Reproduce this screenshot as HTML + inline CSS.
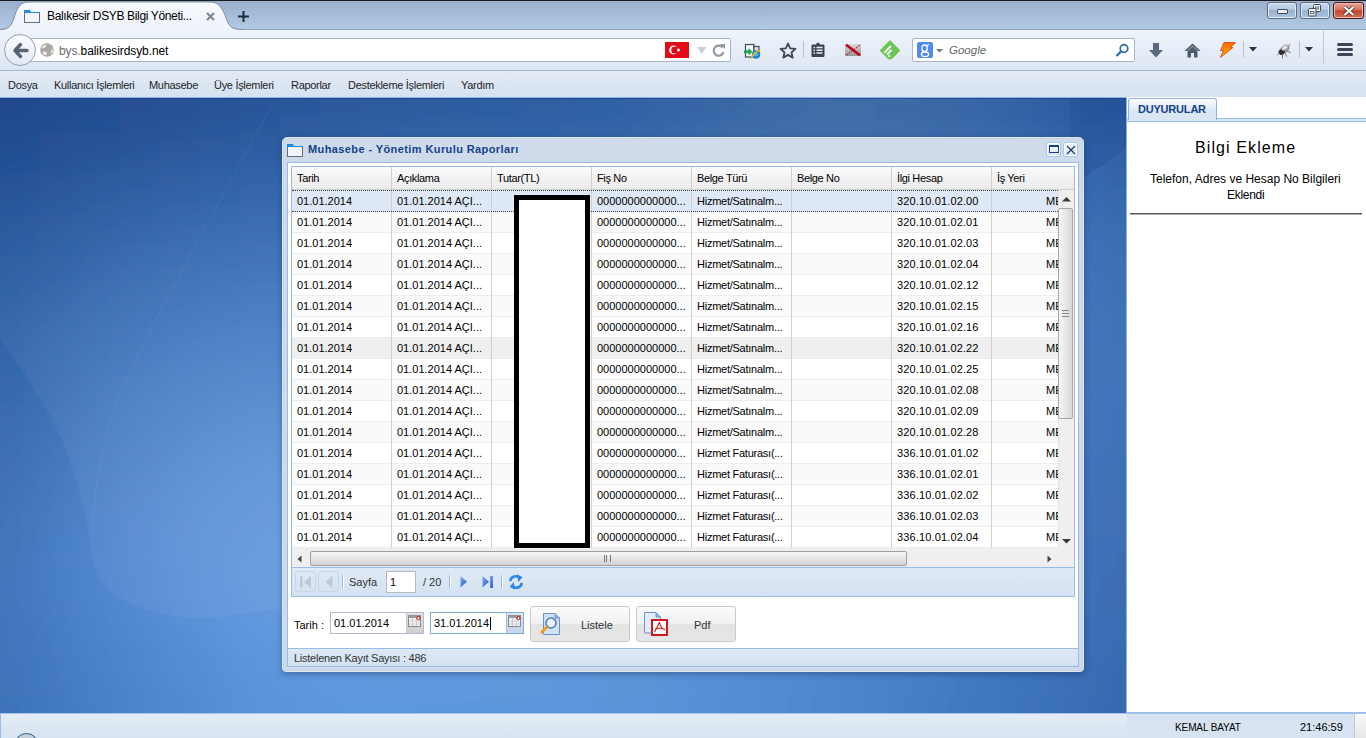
<!DOCTYPE html>
<html><head><meta charset="utf-8">
<style>
*{box-sizing:border-box}
html,body{margin:0;padding:0}
body{width:1366px;height:738px;overflow:hidden;position:relative;font-family:"Liberation Sans",sans-serif;font-size:11px;color:#000;background:#3a6cb5}
.a{position:absolute}
.t{position:absolute;white-space:nowrap;line-height:1}
svg{position:absolute;overflow:visible}
.mt{font-size:11px;color:#1e1e1e;letter-spacing:-0.3px;top:80px}
.gt{font-size:11px;color:#000}
.row{position:absolute;left:292px;width:766px;height:21px;border-bottom:1px solid #ededed;background:#fff}
.row.alt{background:#fafafa}
.row.hov{background:#efefef}
.row.sel{background:#dfe8f6;border-top:1px dotted #404040;border-bottom:1px dotted #404040}
.gcol{position:absolute;width:1px;background:#d0d0d0}
.hcol{position:absolute;width:1px;background:#d0d0d0}
.ht{font-size:11px;color:#000;top:173px;letter-spacing:-0.35px}

</style></head><body>
<!-- ===== TAB STRIP ===== -->
<div class="a" style="left:0;top:0;width:1366px;height:29px;background:linear-gradient(#97afcd,#b3cae4)"></div>
<div class="a" style="left:0;top:0;width:1366px;height:1px;background:#1c1c1c"></div>
<!-- window buttons -->
<div class="a" style="left:1267px;top:2px;width:30px;height:17px;border:1px solid #5b6d84;border-radius:3px;background:linear-gradient(#c9d9ec 0%,#b3c8e0 45%,#98b2d0 50%,#a9c2de 100%);box-shadow:inset 0 0 0 1px #e2ebf6"></div>
<div class="a" style="left:1277px;top:9px;width:11px;height:5px;border:1px solid #3d4a5c;background:#f2f2f2;border-radius:1px"></div>
<div class="a" style="left:1300px;top:2px;width:30px;height:17px;border:1px solid #5b6d84;border-radius:3px;background:linear-gradient(#c9d9ec 0%,#b3c8e0 45%,#98b2d0 50%,#a9c2de 100%);box-shadow:inset 0 0 0 1px #e2ebf6"></div>
<svg style="left:1308px;top:4px" width="14" height="13"><rect x="5.5" y="0.5" width="7" height="7" rx="1" fill="#f4f4f4" stroke="#3d4a5c"/><rect x="7.5" y="3" width="3" height="2" fill="none" stroke="#3d4a5c" stroke-width="0.8"/><rect x="0.5" y="4.5" width="7.5" height="7.5" rx="1" fill="#f4f4f4" stroke="#3d4a5c"/><rect x="2.5" y="7.5" width="3.5" height="2.2" fill="none" stroke="#3d4a5c" stroke-width="0.8"/></svg>

<div class="a" style="left:1333px;top:2px;width:31px;height:17px;border:1px solid #4a1214;border-radius:3px;background:linear-gradient(#e8a495 0%,#d9725c 45%,#c4452a 52%,#d36e55 100%);box-shadow:inset 0 0 0 1px #f0c2b6"></div>
<svg style="left:1343px;top:6px" width="12" height="10"><path d="M1.5 1 L10.5 9 M10.5 1 L1.5 9" stroke="#3b2a2a" stroke-width="3.6"/><path d="M1.5 1 L10.5 9 M10.5 1 L1.5 9" stroke="#fff" stroke-width="2.2"/></svg>

<!-- ===== NAV BAR ===== -->
<div class="a" style="left:0;top:29px;width:1366px;height:42px;background:linear-gradient(#eef3fa,#dde7f3);border-top:1px solid #8ea4bd;border-bottom:1px solid #a9b9cd"></div>
<svg style="left:0;top:0" width="260" height="31">
 <defs><linearGradient id="tabg" x1="0" y1="0" x2="0" y2="1"><stop offset="0" stop-color="#f7f9fd"/><stop offset="1" stop-color="#eef3fa"/></linearGradient></defs>
 <path d="M-4 30.5 C10 30 11 27 15 15 C18 6 21 2 29 2 L210 2 C218 2 221 6 225 15 C229 27 231 29.5 243 29.5 L243 31 L-4 31 Z" fill="url(#tabg)"/>
 <path d="M-4 29.5 C10 29.5 11 27 15 15 C18 6 21 2 29 2 L210 2 C218 2 221 6 225 15 C229 27 231 29.5 243 29.5" fill="none" stroke="#7990a9" stroke-width="1"/>
</svg>
<!-- folder icon tab -->
<svg style="left:24px;top:9px" width="17" height="14">
 <rect x="0.5" y="3.5" width="15" height="10" fill="#f4f6fa" stroke="#5f7086"/>
 <path d="M0 1 L6 1 L7 3 L16 3 L16 4 L0 4 Z" fill="#1e8ae6"/>
</svg>
<span class="t" style="left:47px;top:10px;font-size:12px;letter-spacing:-0.35px;color:#000">Balıkesir DSYB Bilgi Yöneti...</span>
<svg style="left:206px;top:12px" width="9" height="9"><path d="M1 1 L8 8 M8 1 L1 8" stroke="#808891" stroke-width="2.2"/></svg>
<svg style="left:238px;top:11px" width="11" height="11"><path d="M5.5 0 V11 M0 5.5 H11" stroke="#1f2b38" stroke-width="2"/></svg>
<!-- address bar -->
<div class="a" style="left:18px;top:38px;width:713px;height:24px;background:#fff;border:1px solid #a5b5c9;border-radius:2px"></div>
<div class="a" style="left:4px;top:34px;width:32px;height:32px;border-radius:50%;background:linear-gradient(#fbfcfe,#e3eaf3);border:1px solid #8e9fb2"></div>
<svg style="left:12px;top:42px" width="18" height="17"><path d="M8.5 2.5 L3 8.5 L8.5 14.5 M4 8.5 H15" fill="none" stroke="#566474" stroke-width="3.4" stroke-linecap="round" stroke-linejoin="round"/></svg>
<svg style="left:40px;top:43px" width="14" height="14"><circle cx="7" cy="7" r="6.8" fill="#a9a9a9"/><path d="M2 5 C2.5 2.5 5 1.5 6.5 2.2 C7 3 5 4.5 3 5.5 Z" fill="#f2f2f2"/><path d="M3 9 C4 8 6.5 8.5 7 10 C7 12 5 12.5 4 12 C3 11 2.5 10 3 9 Z" fill="#f2f2f2"/><path d="M12.8 6 C13.2 8 12.5 10 11 10.5 C10.2 9.5 11 7 12.8 6 Z" fill="#f2f2f2"/></svg>
<span class="t" style="left:59px;top:45px;font-size:12px;color:#6d6d6d;letter-spacing:-0.1px">bys.<span style="color:#000">balikesirdsyb.net</span></span>
<!-- flag -->
<div class="a" style="left:665px;top:42px;width:24px;height:16px;background:#e30a17"></div>
<svg style="left:665px;top:42px" width="24" height="16"><circle cx="8.5" cy="8" r="4.4" fill="#fff"/><circle cx="9.7" cy="8" r="3.5" fill="#e30a17"/><circle cx="13.5" cy="8" r="1.5" fill="#fff"/></svg>
<svg style="left:697px;top:47px" width="10" height="8"><path d="M0 0 H9.5 L4.75 7 Z" fill="#c8d0da"/></svg>
<svg style="left:712px;top:43px" width="14" height="14"><path d="M10.5 4.5 A5 5 0 1 0 11.5 9" stroke="#8b98a6" stroke-width="2.2" fill="none"/><path d="M8 1 L13 1 L13 6 Z" fill="#8b98a6"/></svg>
<!-- IE tab icon -->
<svg style="left:743px;top:43px" width="20" height="17">
 <rect x="2.5" y="1.5" width="8.5" height="12.5" fill="#fbfaf4" stroke="#3b4d66" stroke-width="1.2"/>
 <rect x="11" y="3.5" width="5" height="10" fill="#e9e6dc" stroke="#3b4d66" stroke-width="1.2"/>
 <path d="M1 7.3 H5.5 V5 L9.5 8.8 L5.5 12.6 V10.3 H1 Z" fill="#1fa84a"/>
 <circle cx="13" cy="11.5" r="4.2" fill="#1f7fe0"/>
 <circle cx="13" cy="11.5" r="2" fill="#58b8f8"/>
 <path d="M8.5 15.5 C9 12 13 8 17.5 7.5" stroke="#f4c20f" stroke-width="1.5" fill="none"/>
</svg>
<!-- star -->
<svg style="left:779px;top:42px" width="18" height="17"><path d="M9 1.5 L11.2 6.4 L16.5 6.9 L12.5 10.4 L13.7 15.6 L9 12.9 L4.3 15.6 L5.5 10.4 L1.5 6.9 L6.8 6.4 Z" fill="none" stroke="#3b4756" stroke-width="1.8" stroke-linejoin="round"/></svg>
<div class="a" style="left:803px;top:41px;width:1px;height:17px;background:#b8c4d2"></div>
<svg style="left:810px;top:42px" width="16" height="16"><path d="M2 3 H5.5 L8 0.8 L10.5 3 H14 V14.5 H2 Z" fill="#3b4756" stroke="#3b4756" stroke-linejoin="round"/><path d="M3.5 5.5 H5 M6.5 5.5 H12.5 M3.5 8.2 H5 M6.5 8.2 H12.5 M3.5 11 H5 M6.5 11 H12.5" stroke="#e9eef5" stroke-width="1.4"/></svg>
<svg style="left:845px;top:44px" width="16" height="12"><defs><linearGradient id="xg" x1="0" y1="0" x2="0" y2="1"><stop offset="0" stop-color="#dadada"/><stop offset="1" stop-color="#969696"/></linearGradient></defs><rect x="0" y="0" width="16" height="12" fill="url(#xg)"/><path d="M1 0.8 L15 11.2" stroke="#c0001a" stroke-width="2.6"/><path d="M15 1 L1 11.5" stroke="#c0001a" stroke-width="1" stroke-dasharray="2 1"/></svg>
<svg style="left:879px;top:40px" width="22" height="20"><path d="M11 1.5 L20 10.5 L13 17.5 Q11 19.5 9 17.5 L2 10.5 Z" fill="#6cc655" stroke="#6cc655" stroke-width="2" stroke-linejoin="round"/><path d="M6 12 L11.5 6.5 M8.5 14 L12 10.5" stroke="#fff" stroke-width="1.8" stroke-linecap="round"/><circle cx="10.2" cy="16" r="1.1" fill="#fff"/></svg>
<!-- search box -->
<div class="a" style="left:912px;top:38px;width:223px;height:24px;background:#fff;border:1px solid #a5b5c9;border-radius:2px"></div>
<div class="a" style="left:917px;top:42px;width:16px;height:16px;background:#4d8bf2;border-radius:2px"></div>
<svg style="left:917px;top:42px" width="16" height="16"><ellipse cx="7.6" cy="6.2" rx="2.7" ry="3.2" fill="none" stroke="#fff" stroke-width="1.3"/><ellipse cx="8" cy="12.3" rx="3.6" ry="2.3" fill="none" stroke="#fff" stroke-width="1.3"/><path d="M6 8.8 C5 9.5 5.5 10.2 6.5 10.2 M9.5 3.5 L12 2.6" stroke="#fff" stroke-width="1.2" fill="none"/></svg>
<svg style="left:936px;top:49px" width="8" height="4"><path d="M0 0 H7 L3.5 3.5 Z" fill="#6b7785"/></svg>
<span class="t" style="left:949px;top:45px;font-size:11.5px;font-style:italic;color:#666">Google</span>
<svg style="left:1115px;top:43px" width="15" height="14"><circle cx="9" cy="5.5" r="3.8" fill="none" stroke="#2a6aa8" stroke-width="1.7"/><path d="M6.2 8.3 L1.5 13" stroke="#2a6aa8" stroke-width="2.3"/></svg>
<!-- right icons -->
<svg style="left:1148px;top:42px" width="16" height="16"><path d="M5 1 H11 V8 H15 L8 15.5 L1 8 H5 Z" fill="#59687a"/></svg>
<svg style="left:1184px;top:43px" width="17" height="15"><path d="M8.5 0.5 L16.5 8 L14 8 L8.5 3 L3 8 L0.5 8 Z" fill="#4e5d6e"/><path d="M3.5 8 L8.5 3.5 L13.5 8 V14.5 H10 V10 H7 V14.5 H3.5 Z" fill="#4e5d6e"/></svg>
<svg style="left:1219px;top:41px" width="18" height="18"><defs><linearGradient id="fg" x1="0" y1="0" x2="0" y2="1"><stop offset="0" stop-color="#ff6a00"/><stop offset="1" stop-color="#ffb000"/></linearGradient></defs><path d="M5 1.5 L16.5 1.5 L11.5 6.5 L14 6.5 L1.5 16.5 L4.5 9.5 L1.5 9.5 Z" fill="url(#fg)" stroke="#d5400a" stroke-width="0.8" stroke-linejoin="round"/></svg>
<div class="a" style="left:1243px;top:41px;width:1px;height:17px;background:#b8c4d2"></div>
<svg style="left:1249px;top:47px" width="9" height="5"><path d="M0 0 H8 L4 4.5 Z" fill="#273442"/></svg>
<svg style="left:1275px;top:42px" width="18" height="16"><g transform="rotate(-35 9 8)"><ellipse cx="9" cy="8" rx="6.5" ry="3.6" fill="#9a9a9a"/><ellipse cx="6" cy="8.3" rx="3" ry="2.8" fill="#2e2e2e"/><ellipse cx="11" cy="6.5" rx="3.6" ry="2.2" fill="#e4e4e4" stroke="#777" stroke-width="0.6"/><path d="M5 11 L3 14 M8 11.5 L7.5 15 M11 11 L13 14 M2.5 8 L0.5 8.5 M15 7 L17.5 7" stroke="#555" stroke-width="0.7"/></g></svg>
<div class="a" style="left:1299px;top:41px;width:1px;height:17px;background:#b8c4d2"></div>
<svg style="left:1305px;top:47px" width="9" height="5"><path d="M0 0 H8 L4 4.5 Z" fill="#273442"/></svg>
<div class="a" style="left:1323px;top:30px;width:1px;height:34px;background:#c0cbd8"></div>
<div class="a" style="left:1337px;top:43px;width:16px;height:3px;background:#3b4756;border-radius:1.5px"></div>
<div class="a" style="left:1337px;top:48px;width:16px;height:3px;background:#3b4756;border-radius:1.5px"></div>
<div class="a" style="left:1337px;top:53px;width:16px;height:3px;background:#3b4756;border-radius:1.5px"></div>

<!-- ===== MENU BAR ===== -->
<div class="a" style="left:0;top:71px;width:1366px;height:26px;background:linear-gradient(#e2eaf5,#d6e2f0)"></div>
<span class="t mt" style="left:8px">Dosya</span>
<span class="t mt" style="left:54px">Kullanıcı İşlemleri</span>
<span class="t mt" style="left:149px">Muhasebe</span>
<span class="t mt" style="left:214px">Üye İşlemleri</span>
<span class="t mt" style="left:291px">Raporlar</span>
<span class="t mt" style="left:348px">Destekleme İşlemleri</span>
<span class="t mt" style="left:461px">Yardım</span>

<!-- ===== DESKTOP ===== -->
<div class="a" style="left:0;top:97px;width:1126px;height:616px;overflow:hidden">
<svg style="left:0;top:0" width="1126" height="616" viewBox="0 97 1126 616">
 <defs>
  <filter id="bl" filterUnits="userSpaceOnUse" x="-200" y="-100" width="1600" height="1000"><feGaussianBlur stdDeviation="28"/></filter>
  <radialGradient id="sw" cx="330" cy="560" r="700" gradientUnits="userSpaceOnUse">
   <stop offset="0" stop-color="#ffffff" stop-opacity="0.045"/>
   <stop offset="0.5" stop-color="#ffffff" stop-opacity="0.045"/>
   <stop offset="1" stop-color="#ffffff" stop-opacity="0"/>
  </radialGradient>
 </defs>
 <g filter="url(#bl)">
<rect x="-120" y="-23" width="40" height="40" fill="#184185"/>
<rect x="-80" y="-23" width="40" height="40" fill="#184185"/>
<rect x="-40" y="-23" width="40" height="40" fill="#184185"/>
<rect x="0" y="-23" width="40" height="40" fill="#194386"/>
<rect x="40" y="-23" width="40" height="40" fill="#1b4589"/>
<rect x="80" y="-23" width="40" height="40" fill="#1c468b"/>
<rect x="120" y="-23" width="40" height="40" fill="#1d488d"/>
<rect x="160" y="-23" width="40" height="40" fill="#1e4a8f"/>
<rect x="200" y="-23" width="40" height="40" fill="#1f4c91"/>
<rect x="240" y="-23" width="40" height="40" fill="#204d93"/>
<rect x="280" y="-23" width="40" height="40" fill="#214f95"/>
<rect x="320" y="-23" width="40" height="40" fill="#225196"/>
<rect x="360" y="-23" width="40" height="40" fill="#245397"/>
<rect x="400" y="-23" width="40" height="40" fill="#245598"/>
<rect x="440" y="-23" width="40" height="40" fill="#25569a"/>
<rect x="480" y="-23" width="40" height="40" fill="#25579b"/>
<rect x="520" y="-23" width="40" height="40" fill="#26589d"/>
<rect x="560" y="-23" width="40" height="40" fill="#27599e"/>
<rect x="600" y="-23" width="40" height="40" fill="#2a5ba0"/>
<rect x="640" y="-23" width="40" height="40" fill="#2e5ea1"/>
<rect x="680" y="-23" width="40" height="40" fill="#3261a2"/>
<rect x="720" y="-23" width="40" height="40" fill="#3764a3"/>
<rect x="760" y="-23" width="40" height="40" fill="#3a67a4"/>
<rect x="800" y="-23" width="40" height="40" fill="#3d69a5"/>
<rect x="840" y="-23" width="40" height="40" fill="#3c69a5"/>
<rect x="880" y="-23" width="40" height="40" fill="#3b67a4"/>
<rect x="920" y="-23" width="40" height="40" fill="#3865a4"/>
<rect x="960" y="-23" width="40" height="40" fill="#3462a3"/>
<rect x="1000" y="-23" width="40" height="40" fill="#305fa2"/>
<rect x="1040" y="-23" width="40" height="40" fill="#2b5ba0"/>
<rect x="1080" y="-23" width="40" height="40" fill="#27579e"/>
<rect x="1120" y="-23" width="40" height="40" fill="#25549d"/>
<rect x="1160" y="-23" width="40" height="40" fill="#25549d"/>
<rect x="1200" y="-23" width="40" height="40" fill="#25549d"/>
<rect x="1240" y="-23" width="40" height="40" fill="#25549d"/>
<rect x="-120" y="17" width="40" height="40" fill="#184185"/>
<rect x="-80" y="17" width="40" height="40" fill="#184185"/>
<rect x="-40" y="17" width="40" height="40" fill="#184185"/>
<rect x="0" y="17" width="40" height="40" fill="#194386"/>
<rect x="40" y="17" width="40" height="40" fill="#1b4589"/>
<rect x="80" y="17" width="40" height="40" fill="#1c468b"/>
<rect x="120" y="17" width="40" height="40" fill="#1d488d"/>
<rect x="160" y="17" width="40" height="40" fill="#1e4a8f"/>
<rect x="200" y="17" width="40" height="40" fill="#1f4c91"/>
<rect x="240" y="17" width="40" height="40" fill="#204d93"/>
<rect x="280" y="17" width="40" height="40" fill="#214f95"/>
<rect x="320" y="17" width="40" height="40" fill="#225196"/>
<rect x="360" y="17" width="40" height="40" fill="#245397"/>
<rect x="400" y="17" width="40" height="40" fill="#245598"/>
<rect x="440" y="17" width="40" height="40" fill="#25569a"/>
<rect x="480" y="17" width="40" height="40" fill="#25579b"/>
<rect x="520" y="17" width="40" height="40" fill="#26589d"/>
<rect x="560" y="17" width="40" height="40" fill="#27599e"/>
<rect x="600" y="17" width="40" height="40" fill="#2a5ba0"/>
<rect x="640" y="17" width="40" height="40" fill="#2e5ea1"/>
<rect x="680" y="17" width="40" height="40" fill="#3261a2"/>
<rect x="720" y="17" width="40" height="40" fill="#3764a3"/>
<rect x="760" y="17" width="40" height="40" fill="#3a67a4"/>
<rect x="800" y="17" width="40" height="40" fill="#3d69a5"/>
<rect x="840" y="17" width="40" height="40" fill="#3c69a5"/>
<rect x="880" y="17" width="40" height="40" fill="#3b67a4"/>
<rect x="920" y="17" width="40" height="40" fill="#3865a4"/>
<rect x="960" y="17" width="40" height="40" fill="#3462a3"/>
<rect x="1000" y="17" width="40" height="40" fill="#305fa2"/>
<rect x="1040" y="17" width="40" height="40" fill="#2b5ba0"/>
<rect x="1080" y="17" width="40" height="40" fill="#27579e"/>
<rect x="1120" y="17" width="40" height="40" fill="#25549d"/>
<rect x="1160" y="17" width="40" height="40" fill="#25549d"/>
<rect x="1200" y="17" width="40" height="40" fill="#25549d"/>
<rect x="1240" y="17" width="40" height="40" fill="#25549d"/>
<rect x="-120" y="57" width="40" height="40" fill="#184185"/>
<rect x="-80" y="57" width="40" height="40" fill="#184185"/>
<rect x="-40" y="57" width="40" height="40" fill="#184185"/>
<rect x="0" y="57" width="40" height="40" fill="#194386"/>
<rect x="40" y="57" width="40" height="40" fill="#1b4589"/>
<rect x="80" y="57" width="40" height="40" fill="#1c468b"/>
<rect x="120" y="57" width="40" height="40" fill="#1d488d"/>
<rect x="160" y="57" width="40" height="40" fill="#1e4a8f"/>
<rect x="200" y="57" width="40" height="40" fill="#1f4c91"/>
<rect x="240" y="57" width="40" height="40" fill="#204d93"/>
<rect x="280" y="57" width="40" height="40" fill="#214f95"/>
<rect x="320" y="57" width="40" height="40" fill="#225196"/>
<rect x="360" y="57" width="40" height="40" fill="#245397"/>
<rect x="400" y="57" width="40" height="40" fill="#245598"/>
<rect x="440" y="57" width="40" height="40" fill="#25569a"/>
<rect x="480" y="57" width="40" height="40" fill="#25579b"/>
<rect x="520" y="57" width="40" height="40" fill="#26589d"/>
<rect x="560" y="57" width="40" height="40" fill="#27599e"/>
<rect x="600" y="57" width="40" height="40" fill="#2a5ba0"/>
<rect x="640" y="57" width="40" height="40" fill="#2e5ea1"/>
<rect x="680" y="57" width="40" height="40" fill="#3261a2"/>
<rect x="720" y="57" width="40" height="40" fill="#3764a3"/>
<rect x="760" y="57" width="40" height="40" fill="#3a67a4"/>
<rect x="800" y="57" width="40" height="40" fill="#3d69a5"/>
<rect x="840" y="57" width="40" height="40" fill="#3c69a5"/>
<rect x="880" y="57" width="40" height="40" fill="#3b67a4"/>
<rect x="920" y="57" width="40" height="40" fill="#3865a4"/>
<rect x="960" y="57" width="40" height="40" fill="#3462a3"/>
<rect x="1000" y="57" width="40" height="40" fill="#305fa2"/>
<rect x="1040" y="57" width="40" height="40" fill="#2b5ba0"/>
<rect x="1080" y="57" width="40" height="40" fill="#27579e"/>
<rect x="1120" y="57" width="40" height="40" fill="#25549d"/>
<rect x="1160" y="57" width="40" height="40" fill="#25549d"/>
<rect x="1200" y="57" width="40" height="40" fill="#25549d"/>
<rect x="1240" y="57" width="40" height="40" fill="#25549d"/>
<rect x="-120" y="97" width="40" height="40" fill="#1a4488"/>
<rect x="-80" y="97" width="40" height="40" fill="#1a4488"/>
<rect x="-40" y="97" width="40" height="40" fill="#1a4488"/>
<rect x="0" y="97" width="40" height="40" fill="#1b4589"/>
<rect x="40" y="97" width="40" height="40" fill="#1d488c"/>
<rect x="80" y="97" width="40" height="40" fill="#1e4a8e"/>
<rect x="120" y="97" width="40" height="40" fill="#204b90"/>
<rect x="160" y="97" width="40" height="40" fill="#214d93"/>
<rect x="200" y="97" width="40" height="40" fill="#224f95"/>
<rect x="240" y="97" width="40" height="40" fill="#225197"/>
<rect x="280" y="97" width="40" height="40" fill="#245398"/>
<rect x="320" y="97" width="40" height="40" fill="#25559a"/>
<rect x="360" y="97" width="40" height="40" fill="#26579b"/>
<rect x="400" y="97" width="40" height="40" fill="#27589c"/>
<rect x="440" y="97" width="40" height="40" fill="#28599d"/>
<rect x="480" y="97" width="40" height="40" fill="#285a9f"/>
<rect x="520" y="97" width="40" height="40" fill="#295ba0"/>
<rect x="560" y="97" width="40" height="40" fill="#2a5ca2"/>
<rect x="600" y="97" width="40" height="40" fill="#2c5ea3"/>
<rect x="640" y="97" width="40" height="40" fill="#3061a4"/>
<rect x="680" y="97" width="40" height="40" fill="#3564a5"/>
<rect x="720" y="97" width="40" height="40" fill="#3968a6"/>
<rect x="760" y="97" width="40" height="40" fill="#3d6aa7"/>
<rect x="800" y="97" width="40" height="40" fill="#3f6ca7"/>
<rect x="840" y="97" width="40" height="40" fill="#3f6ca8"/>
<rect x="880" y="97" width="40" height="40" fill="#3d6aa7"/>
<rect x="920" y="97" width="40" height="40" fill="#3b68a7"/>
<rect x="960" y="97" width="40" height="40" fill="#3766a6"/>
<rect x="1000" y="97" width="40" height="40" fill="#3362a5"/>
<rect x="1040" y="97" width="40" height="40" fill="#2e5ea3"/>
<rect x="1080" y="97" width="40" height="40" fill="#2a5aa1"/>
<rect x="1120" y="97" width="40" height="40" fill="#2758a0"/>
<rect x="1160" y="97" width="40" height="40" fill="#2758a0"/>
<rect x="1200" y="97" width="40" height="40" fill="#2758a0"/>
<rect x="1240" y="97" width="40" height="40" fill="#2758a0"/>
<rect x="-120" y="137" width="40" height="40" fill="#1e4a8e"/>
<rect x="-80" y="137" width="40" height="40" fill="#1e4a8e"/>
<rect x="-40" y="137" width="40" height="40" fill="#1e4a8e"/>
<rect x="0" y="137" width="40" height="40" fill="#1f4b90"/>
<rect x="40" y="137" width="40" height="40" fill="#214e93"/>
<rect x="80" y="137" width="40" height="40" fill="#235196"/>
<rect x="120" y="137" width="40" height="40" fill="#245398"/>
<rect x="160" y="137" width="40" height="40" fill="#26559b"/>
<rect x="200" y="137" width="40" height="40" fill="#27569d"/>
<rect x="240" y="137" width="40" height="40" fill="#27589f"/>
<rect x="280" y="137" width="40" height="40" fill="#295aa1"/>
<rect x="320" y="137" width="40" height="40" fill="#2a5ca2"/>
<rect x="360" y="137" width="40" height="40" fill="#2c5ea3"/>
<rect x="400" y="137" width="40" height="40" fill="#2d5fa4"/>
<rect x="440" y="137" width="40" height="40" fill="#2d60a5"/>
<rect x="480" y="137" width="40" height="40" fill="#2e61a6"/>
<rect x="520" y="137" width="40" height="40" fill="#2f62a7"/>
<rect x="560" y="137" width="40" height="40" fill="#3063a8"/>
<rect x="600" y="137" width="40" height="40" fill="#3265a9"/>
<rect x="640" y="137" width="40" height="40" fill="#3668aa"/>
<rect x="680" y="137" width="40" height="40" fill="#3a6bab"/>
<rect x="720" y="137" width="40" height="40" fill="#3e6dac"/>
<rect x="760" y="137" width="40" height="40" fill="#4170ad"/>
<rect x="800" y="137" width="40" height="40" fill="#4371ad"/>
<rect x="840" y="137" width="40" height="40" fill="#4371ad"/>
<rect x="880" y="137" width="40" height="40" fill="#4270ad"/>
<rect x="920" y="137" width="40" height="40" fill="#3f6ead"/>
<rect x="960" y="137" width="40" height="40" fill="#3c6cac"/>
<rect x="1000" y="137" width="40" height="40" fill="#3869ab"/>
<rect x="1040" y="137" width="40" height="40" fill="#3466aa"/>
<rect x="1080" y="137" width="40" height="40" fill="#3062a8"/>
<rect x="1120" y="137" width="40" height="40" fill="#2e60a7"/>
<rect x="1160" y="137" width="40" height="40" fill="#2e60a7"/>
<rect x="1200" y="137" width="40" height="40" fill="#2e60a7"/>
<rect x="1240" y="137" width="40" height="40" fill="#2e60a7"/>
<rect x="-120" y="177" width="40" height="40" fill="#214f94"/>
<rect x="-80" y="177" width="40" height="40" fill="#214f94"/>
<rect x="-40" y="177" width="40" height="40" fill="#214f94"/>
<rect x="0" y="177" width="40" height="40" fill="#235196"/>
<rect x="40" y="177" width="40" height="40" fill="#25559a"/>
<rect x="80" y="177" width="40" height="40" fill="#28589d"/>
<rect x="120" y="177" width="40" height="40" fill="#2a5aa1"/>
<rect x="160" y="177" width="40" height="40" fill="#2b5da3"/>
<rect x="200" y="177" width="40" height="40" fill="#2c5ea6"/>
<rect x="240" y="177" width="40" height="40" fill="#2d60a8"/>
<rect x="280" y="177" width="40" height="40" fill="#2f62a9"/>
<rect x="320" y="177" width="40" height="40" fill="#3063aa"/>
<rect x="360" y="177" width="40" height="40" fill="#3265ab"/>
<rect x="400" y="177" width="40" height="40" fill="#3366ac"/>
<rect x="440" y="177" width="40" height="40" fill="#3467ad"/>
<rect x="480" y="177" width="40" height="40" fill="#3468ad"/>
<rect x="520" y="177" width="40" height="40" fill="#3569ae"/>
<rect x="560" y="177" width="40" height="40" fill="#366aaf"/>
<rect x="600" y="177" width="40" height="40" fill="#386cb0"/>
<rect x="640" y="177" width="40" height="40" fill="#3b6eb1"/>
<rect x="680" y="177" width="40" height="40" fill="#3f70b1"/>
<rect x="720" y="177" width="40" height="40" fill="#4273b2"/>
<rect x="760" y="177" width="40" height="40" fill="#4575b2"/>
<rect x="800" y="177" width="40" height="40" fill="#4676b2"/>
<rect x="840" y="177" width="40" height="40" fill="#4776b2"/>
<rect x="880" y="177" width="40" height="40" fill="#4675b2"/>
<rect x="920" y="177" width="40" height="40" fill="#4374b2"/>
<rect x="960" y="177" width="40" height="40" fill="#4172b1"/>
<rect x="1000" y="177" width="40" height="40" fill="#3e70b1"/>
<rect x="1040" y="177" width="40" height="40" fill="#3a6db0"/>
<rect x="1080" y="177" width="40" height="40" fill="#376aae"/>
<rect x="1120" y="177" width="40" height="40" fill="#3467ad"/>
<rect x="1160" y="177" width="40" height="40" fill="#3467ad"/>
<rect x="1200" y="177" width="40" height="40" fill="#3467ad"/>
<rect x="1240" y="177" width="40" height="40" fill="#3467ad"/>
<rect x="-120" y="217" width="40" height="40" fill="#25559a"/>
<rect x="-80" y="217" width="40" height="40" fill="#25559a"/>
<rect x="-40" y="217" width="40" height="40" fill="#25559a"/>
<rect x="0" y="217" width="40" height="40" fill="#27579c"/>
<rect x="40" y="217" width="40" height="40" fill="#2a5ba0"/>
<rect x="80" y="217" width="40" height="40" fill="#2d5fa5"/>
<rect x="120" y="217" width="40" height="40" fill="#2f62a9"/>
<rect x="160" y="217" width="40" height="40" fill="#3165ac"/>
<rect x="200" y="217" width="40" height="40" fill="#3367af"/>
<rect x="240" y="217" width="40" height="40" fill="#3469b1"/>
<rect x="280" y="217" width="40" height="40" fill="#366ab2"/>
<rect x="320" y="217" width="40" height="40" fill="#376cb3"/>
<rect x="360" y="217" width="40" height="40" fill="#386db3"/>
<rect x="400" y="217" width="40" height="40" fill="#396eb4"/>
<rect x="440" y="217" width="40" height="40" fill="#3a6fb4"/>
<rect x="480" y="217" width="40" height="40" fill="#3b70b5"/>
<rect x="520" y="217" width="40" height="40" fill="#3c70b5"/>
<rect x="560" y="217" width="40" height="40" fill="#3d71b6"/>
<rect x="600" y="217" width="40" height="40" fill="#3f73b6"/>
<rect x="640" y="217" width="40" height="40" fill="#4174b7"/>
<rect x="680" y="217" width="40" height="40" fill="#4476b7"/>
<rect x="720" y="217" width="40" height="40" fill="#4678b7"/>
<rect x="760" y="217" width="40" height="40" fill="#4879b7"/>
<rect x="800" y="217" width="40" height="40" fill="#497ab7"/>
<rect x="840" y="217" width="40" height="40" fill="#497ab7"/>
<rect x="880" y="217" width="40" height="40" fill="#4879b7"/>
<rect x="920" y="217" width="40" height="40" fill="#4778b6"/>
<rect x="960" y="217" width="40" height="40" fill="#4476b6"/>
<rect x="1000" y="217" width="40" height="40" fill="#4275b5"/>
<rect x="1040" y="217" width="40" height="40" fill="#3f72b4"/>
<rect x="1080" y="217" width="40" height="40" fill="#3b6fb3"/>
<rect x="1120" y="217" width="40" height="40" fill="#396cb1"/>
<rect x="1160" y="217" width="40" height="40" fill="#396cb1"/>
<rect x="1200" y="217" width="40" height="40" fill="#396cb1"/>
<rect x="1240" y="217" width="40" height="40" fill="#396cb1"/>
<rect x="-120" y="257" width="40" height="40" fill="#295a9f"/>
<rect x="-80" y="257" width="40" height="40" fill="#295a9f"/>
<rect x="-40" y="257" width="40" height="40" fill="#295a9f"/>
<rect x="0" y="257" width="40" height="40" fill="#2b5da2"/>
<rect x="40" y="257" width="40" height="40" fill="#2f61a7"/>
<rect x="80" y="257" width="40" height="40" fill="#3266ac"/>
<rect x="120" y="257" width="40" height="40" fill="#356ab0"/>
<rect x="160" y="257" width="40" height="40" fill="#386eb4"/>
<rect x="200" y="257" width="40" height="40" fill="#3a70b7"/>
<rect x="240" y="257" width="40" height="40" fill="#3c72b9"/>
<rect x="280" y="257" width="40" height="40" fill="#3d73ba"/>
<rect x="320" y="257" width="40" height="40" fill="#3f74bb"/>
<rect x="360" y="257" width="40" height="40" fill="#4075bb"/>
<rect x="400" y="257" width="40" height="40" fill="#4076bc"/>
<rect x="440" y="257" width="40" height="40" fill="#4176bc"/>
<rect x="480" y="257" width="40" height="40" fill="#4277bc"/>
<rect x="520" y="257" width="40" height="40" fill="#4277bc"/>
<rect x="560" y="257" width="40" height="40" fill="#4378bc"/>
<rect x="600" y="257" width="40" height="40" fill="#4479bc"/>
<rect x="640" y="257" width="40" height="40" fill="#467abc"/>
<rect x="680" y="257" width="40" height="40" fill="#487bbc"/>
<rect x="720" y="257" width="40" height="40" fill="#4a7cbc"/>
<rect x="760" y="257" width="40" height="40" fill="#4b7dbc"/>
<rect x="800" y="257" width="40" height="40" fill="#4c7ebc"/>
<rect x="840" y="257" width="40" height="40" fill="#4c7dbb"/>
<rect x="880" y="257" width="40" height="40" fill="#4b7dbb"/>
<rect x="920" y="257" width="40" height="40" fill="#497bba"/>
<rect x="960" y="257" width="40" height="40" fill="#477aba"/>
<rect x="1000" y="257" width="40" height="40" fill="#4578b9"/>
<rect x="1040" y="257" width="40" height="40" fill="#4275b7"/>
<rect x="1080" y="257" width="40" height="40" fill="#3e72b6"/>
<rect x="1120" y="257" width="40" height="40" fill="#3c6fb4"/>
<rect x="1160" y="257" width="40" height="40" fill="#3c6fb4"/>
<rect x="1200" y="257" width="40" height="40" fill="#3c6fb4"/>
<rect x="1240" y="257" width="40" height="40" fill="#3c6fb4"/>
<rect x="-120" y="297" width="40" height="40" fill="#2d5fa4"/>
<rect x="-80" y="297" width="40" height="40" fill="#2d5fa4"/>
<rect x="-40" y="297" width="40" height="40" fill="#2d5fa4"/>
<rect x="0" y="297" width="40" height="40" fill="#2f62a7"/>
<rect x="40" y="297" width="40" height="40" fill="#3468ac"/>
<rect x="80" y="297" width="40" height="40" fill="#386db2"/>
<rect x="120" y="297" width="40" height="40" fill="#3c72b7"/>
<rect x="160" y="297" width="40" height="40" fill="#3f76bb"/>
<rect x="200" y="297" width="40" height="40" fill="#4279bf"/>
<rect x="240" y="297" width="40" height="40" fill="#447ac1"/>
<rect x="280" y="297" width="40" height="40" fill="#457cc2"/>
<rect x="320" y="297" width="40" height="40" fill="#467cc2"/>
<rect x="360" y="297" width="40" height="40" fill="#477dc3"/>
<rect x="400" y="297" width="40" height="40" fill="#477dc3"/>
<rect x="440" y="297" width="40" height="40" fill="#487ec3"/>
<rect x="480" y="297" width="40" height="40" fill="#487ec2"/>
<rect x="520" y="297" width="40" height="40" fill="#487ec2"/>
<rect x="560" y="297" width="40" height="40" fill="#497ec2"/>
<rect x="600" y="297" width="40" height="40" fill="#4a7fc2"/>
<rect x="640" y="297" width="40" height="40" fill="#4b7fc1"/>
<rect x="680" y="297" width="40" height="40" fill="#4c80c1"/>
<rect x="720" y="297" width="40" height="40" fill="#4d81c1"/>
<rect x="760" y="297" width="40" height="40" fill="#4e81c0"/>
<rect x="800" y="297" width="40" height="40" fill="#4e81c0"/>
<rect x="840" y="297" width="40" height="40" fill="#4d80bf"/>
<rect x="880" y="297" width="40" height="40" fill="#4c7fbe"/>
<rect x="920" y="297" width="40" height="40" fill="#4b7ebd"/>
<rect x="960" y="297" width="40" height="40" fill="#497cbc"/>
<rect x="1000" y="297" width="40" height="40" fill="#467abb"/>
<rect x="1040" y="297" width="40" height="40" fill="#4377b9"/>
<rect x="1080" y="297" width="40" height="40" fill="#4073b7"/>
<rect x="1120" y="297" width="40" height="40" fill="#3e71b6"/>
<rect x="1160" y="297" width="40" height="40" fill="#3e71b6"/>
<rect x="1200" y="297" width="40" height="40" fill="#3e71b6"/>
<rect x="1240" y="297" width="40" height="40" fill="#3e71b6"/>
<rect x="-120" y="337" width="40" height="40" fill="#3264a8"/>
<rect x="-80" y="337" width="40" height="40" fill="#3264a8"/>
<rect x="-40" y="337" width="40" height="40" fill="#3264a8"/>
<rect x="0" y="337" width="40" height="40" fill="#3467ab"/>
<rect x="40" y="337" width="40" height="40" fill="#396db1"/>
<rect x="80" y="337" width="40" height="40" fill="#3e73b8"/>
<rect x="120" y="337" width="40" height="40" fill="#4278bd"/>
<rect x="160" y="337" width="40" height="40" fill="#467dc2"/>
<rect x="200" y="337" width="40" height="40" fill="#4980c5"/>
<rect x="240" y="337" width="40" height="40" fill="#4b82c7"/>
<rect x="280" y="337" width="40" height="40" fill="#4d83c9"/>
<rect x="320" y="337" width="40" height="40" fill="#4e84c9"/>
<rect x="360" y="337" width="40" height="40" fill="#4e84c9"/>
<rect x="400" y="337" width="40" height="40" fill="#4e84c9"/>
<rect x="440" y="337" width="40" height="40" fill="#4e84c9"/>
<rect x="480" y="337" width="40" height="40" fill="#4e84c8"/>
<rect x="520" y="337" width="40" height="40" fill="#4e84c8"/>
<rect x="560" y="337" width="40" height="40" fill="#4e84c7"/>
<rect x="600" y="337" width="40" height="40" fill="#4f84c7"/>
<rect x="640" y="337" width="40" height="40" fill="#4f84c6"/>
<rect x="680" y="337" width="40" height="40" fill="#5084c6"/>
<rect x="720" y="337" width="40" height="40" fill="#5084c5"/>
<rect x="760" y="337" width="40" height="40" fill="#5084c4"/>
<rect x="800" y="337" width="40" height="40" fill="#5083c3"/>
<rect x="840" y="337" width="40" height="40" fill="#4f82c2"/>
<rect x="880" y="337" width="40" height="40" fill="#4e81c1"/>
<rect x="920" y="337" width="40" height="40" fill="#4c7fc0"/>
<rect x="960" y="337" width="40" height="40" fill="#4a7dbe"/>
<rect x="1000" y="337" width="40" height="40" fill="#477abd"/>
<rect x="1040" y="337" width="40" height="40" fill="#4477bb"/>
<rect x="1080" y="337" width="40" height="40" fill="#4174b8"/>
<rect x="1120" y="337" width="40" height="40" fill="#3f71b7"/>
<rect x="1160" y="337" width="40" height="40" fill="#3f71b7"/>
<rect x="1200" y="337" width="40" height="40" fill="#3f71b7"/>
<rect x="1240" y="337" width="40" height="40" fill="#3f71b7"/>
<rect x="-120" y="377" width="40" height="40" fill="#3668ab"/>
<rect x="-80" y="377" width="40" height="40" fill="#3668ab"/>
<rect x="-40" y="377" width="40" height="40" fill="#3668ab"/>
<rect x="0" y="377" width="40" height="40" fill="#396baf"/>
<rect x="40" y="377" width="40" height="40" fill="#3e72b6"/>
<rect x="80" y="377" width="40" height="40" fill="#4479bd"/>
<rect x="120" y="377" width="40" height="40" fill="#497ec3"/>
<rect x="160" y="377" width="40" height="40" fill="#4d83c7"/>
<rect x="200" y="377" width="40" height="40" fill="#5187cb"/>
<rect x="240" y="377" width="40" height="40" fill="#5389cd"/>
<rect x="280" y="377" width="40" height="40" fill="#548acf"/>
<rect x="320" y="377" width="40" height="40" fill="#558bcf"/>
<rect x="360" y="377" width="40" height="40" fill="#558bcf"/>
<rect x="400" y="377" width="40" height="40" fill="#558bcf"/>
<rect x="440" y="377" width="40" height="40" fill="#548ace"/>
<rect x="480" y="377" width="40" height="40" fill="#548ace"/>
<rect x="520" y="377" width="40" height="40" fill="#5389cd"/>
<rect x="560" y="377" width="40" height="40" fill="#5389cc"/>
<rect x="600" y="377" width="40" height="40" fill="#5388cb"/>
<rect x="640" y="377" width="40" height="40" fill="#5388ca"/>
<rect x="680" y="377" width="40" height="40" fill="#5388c9"/>
<rect x="720" y="377" width="40" height="40" fill="#5287c8"/>
<rect x="760" y="377" width="40" height="40" fill="#5286c7"/>
<rect x="800" y="377" width="40" height="40" fill="#5185c6"/>
<rect x="840" y="377" width="40" height="40" fill="#5084c5"/>
<rect x="880" y="377" width="40" height="40" fill="#4e82c3"/>
<rect x="920" y="377" width="40" height="40" fill="#4c80c1"/>
<rect x="960" y="377" width="40" height="40" fill="#4a7dc0"/>
<rect x="1000" y="377" width="40" height="40" fill="#477bbe"/>
<rect x="1040" y="377" width="40" height="40" fill="#4577bb"/>
<rect x="1080" y="377" width="40" height="40" fill="#4174b9"/>
<rect x="1120" y="377" width="40" height="40" fill="#3f71b7"/>
<rect x="1160" y="377" width="40" height="40" fill="#3f71b7"/>
<rect x="1200" y="377" width="40" height="40" fill="#3f71b7"/>
<rect x="1240" y="377" width="40" height="40" fill="#3f71b7"/>
<rect x="-120" y="417" width="40" height="40" fill="#3a6bae"/>
<rect x="-80" y="417" width="40" height="40" fill="#3a6bae"/>
<rect x="-40" y="417" width="40" height="40" fill="#3a6bae"/>
<rect x="0" y="417" width="40" height="40" fill="#3d6fb2"/>
<rect x="40" y="417" width="40" height="40" fill="#4376ba"/>
<rect x="80" y="417" width="40" height="40" fill="#497dc2"/>
<rect x="120" y="417" width="40" height="40" fill="#4f84c8"/>
<rect x="160" y="417" width="40" height="40" fill="#5389cc"/>
<rect x="200" y="417" width="40" height="40" fill="#578dd0"/>
<rect x="240" y="417" width="40" height="40" fill="#598fd2"/>
<rect x="280" y="417" width="40" height="40" fill="#5b90d4"/>
<rect x="320" y="417" width="40" height="40" fill="#5b91d5"/>
<rect x="360" y="417" width="40" height="40" fill="#5b91d5"/>
<rect x="400" y="417" width="40" height="40" fill="#5a90d4"/>
<rect x="440" y="417" width="40" height="40" fill="#5990d3"/>
<rect x="480" y="417" width="40" height="40" fill="#588fd2"/>
<rect x="520" y="417" width="40" height="40" fill="#588ed1"/>
<rect x="560" y="417" width="40" height="40" fill="#578dd0"/>
<rect x="600" y="417" width="40" height="40" fill="#568ccf"/>
<rect x="640" y="417" width="40" height="40" fill="#568bce"/>
<rect x="680" y="417" width="40" height="40" fill="#558bcd"/>
<rect x="720" y="417" width="40" height="40" fill="#5489cb"/>
<rect x="760" y="417" width="40" height="40" fill="#5388ca"/>
<rect x="800" y="417" width="40" height="40" fill="#5287c8"/>
<rect x="840" y="417" width="40" height="40" fill="#5085c7"/>
<rect x="880" y="417" width="40" height="40" fill="#4e83c5"/>
<rect x="920" y="417" width="40" height="40" fill="#4c80c3"/>
<rect x="960" y="417" width="40" height="40" fill="#4a7dc0"/>
<rect x="1000" y="417" width="40" height="40" fill="#477abe"/>
<rect x="1040" y="417" width="40" height="40" fill="#4477bb"/>
<rect x="1080" y="417" width="40" height="40" fill="#4173b9"/>
<rect x="1120" y="417" width="40" height="40" fill="#3f71b7"/>
<rect x="1160" y="417" width="40" height="40" fill="#3f71b7"/>
<rect x="1200" y="417" width="40" height="40" fill="#3f71b7"/>
<rect x="1240" y="417" width="40" height="40" fill="#3f71b7"/>
<rect x="-120" y="457" width="40" height="40" fill="#3d6eb1"/>
<rect x="-80" y="457" width="40" height="40" fill="#3d6eb1"/>
<rect x="-40" y="457" width="40" height="40" fill="#3d6eb1"/>
<rect x="0" y="457" width="40" height="40" fill="#4072b5"/>
<rect x="40" y="457" width="40" height="40" fill="#477abe"/>
<rect x="80" y="457" width="40" height="40" fill="#4d82c6"/>
<rect x="120" y="457" width="40" height="40" fill="#5388cc"/>
<rect x="160" y="457" width="40" height="40" fill="#588dd1"/>
<rect x="200" y="457" width="40" height="40" fill="#5c91d4"/>
<rect x="240" y="457" width="40" height="40" fill="#5f94d7"/>
<rect x="280" y="457" width="40" height="40" fill="#6095d8"/>
<rect x="320" y="457" width="40" height="40" fill="#6096d9"/>
<rect x="360" y="457" width="40" height="40" fill="#6095d9"/>
<rect x="400" y="457" width="40" height="40" fill="#5f95d8"/>
<rect x="440" y="457" width="40" height="40" fill="#5d94d7"/>
<rect x="480" y="457" width="40" height="40" fill="#5c93d6"/>
<rect x="520" y="457" width="40" height="40" fill="#5b92d5"/>
<rect x="560" y="457" width="40" height="40" fill="#5a90d4"/>
<rect x="600" y="457" width="40" height="40" fill="#598fd2"/>
<rect x="640" y="457" width="40" height="40" fill="#588ed1"/>
<rect x="680" y="457" width="40" height="40" fill="#578dcf"/>
<rect x="720" y="457" width="40" height="40" fill="#568bce"/>
<rect x="760" y="457" width="40" height="40" fill="#548acc"/>
<rect x="800" y="457" width="40" height="40" fill="#5288ca"/>
<rect x="840" y="457" width="40" height="40" fill="#5086c8"/>
<rect x="880" y="457" width="40" height="40" fill="#4e83c6"/>
<rect x="920" y="457" width="40" height="40" fill="#4b80c3"/>
<rect x="960" y="457" width="40" height="40" fill="#497dc1"/>
<rect x="1000" y="457" width="40" height="40" fill="#467abe"/>
<rect x="1040" y="457" width="40" height="40" fill="#4376bb"/>
<rect x="1080" y="457" width="40" height="40" fill="#4072b8"/>
<rect x="1120" y="457" width="40" height="40" fill="#3e70b6"/>
<rect x="1160" y="457" width="40" height="40" fill="#3e70b6"/>
<rect x="1200" y="457" width="40" height="40" fill="#3e70b6"/>
<rect x="1240" y="457" width="40" height="40" fill="#3e70b6"/>
<rect x="-120" y="497" width="40" height="40" fill="#3f71b4"/>
<rect x="-80" y="497" width="40" height="40" fill="#3f71b4"/>
<rect x="-40" y="497" width="40" height="40" fill="#3f71b4"/>
<rect x="0" y="497" width="40" height="40" fill="#4275b9"/>
<rect x="40" y="497" width="40" height="40" fill="#4a7ec3"/>
<rect x="80" y="497" width="40" height="40" fill="#5085cb"/>
<rect x="120" y="497" width="40" height="40" fill="#568bd0"/>
<rect x="160" y="497" width="40" height="40" fill="#5b90d4"/>
<rect x="200" y="497" width="40" height="40" fill="#6094d8"/>
<rect x="240" y="497" width="40" height="40" fill="#6397da"/>
<rect x="280" y="497" width="40" height="40" fill="#6499dc"/>
<rect x="320" y="497" width="40" height="40" fill="#6499dc"/>
<rect x="360" y="497" width="40" height="40" fill="#6399dc"/>
<rect x="400" y="497" width="40" height="40" fill="#6298db"/>
<rect x="440" y="497" width="40" height="40" fill="#6097da"/>
<rect x="480" y="497" width="40" height="40" fill="#5f96d9"/>
<rect x="520" y="497" width="40" height="40" fill="#5e94d8"/>
<rect x="560" y="497" width="40" height="40" fill="#5c93d6"/>
<rect x="600" y="497" width="40" height="40" fill="#5b92d5"/>
<rect x="640" y="497" width="40" height="40" fill="#5a90d3"/>
<rect x="680" y="497" width="40" height="40" fill="#588fd2"/>
<rect x="720" y="497" width="40" height="40" fill="#578dd0"/>
<rect x="760" y="497" width="40" height="40" fill="#558bce"/>
<rect x="800" y="497" width="40" height="40" fill="#5288cc"/>
<rect x="840" y="497" width="40" height="40" fill="#5086c9"/>
<rect x="880" y="497" width="40" height="40" fill="#4d83c7"/>
<rect x="920" y="497" width="40" height="40" fill="#4a80c4"/>
<rect x="960" y="497" width="40" height="40" fill="#487cc1"/>
<rect x="1000" y="497" width="40" height="40" fill="#4579be"/>
<rect x="1040" y="497" width="40" height="40" fill="#4275ba"/>
<rect x="1080" y="497" width="40" height="40" fill="#3f71b7"/>
<rect x="1120" y="497" width="40" height="40" fill="#3d6fb5"/>
<rect x="1160" y="497" width="40" height="40" fill="#3d6fb5"/>
<rect x="1200" y="497" width="40" height="40" fill="#3d6fb5"/>
<rect x="1240" y="497" width="40" height="40" fill="#3d6fb5"/>
<rect x="-120" y="537" width="40" height="40" fill="#4073b8"/>
<rect x="-80" y="537" width="40" height="40" fill="#4073b8"/>
<rect x="-40" y="537" width="40" height="40" fill="#4073b8"/>
<rect x="0" y="537" width="40" height="40" fill="#4477bd"/>
<rect x="40" y="537" width="40" height="40" fill="#4b80c7"/>
<rect x="80" y="537" width="40" height="40" fill="#5187ce"/>
<rect x="120" y="537" width="40" height="40" fill="#568cd3"/>
<rect x="160" y="537" width="40" height="40" fill="#5c91d6"/>
<rect x="200" y="537" width="40" height="40" fill="#6196da"/>
<rect x="240" y="537" width="40" height="40" fill="#6599dd"/>
<rect x="280" y="537" width="40" height="40" fill="#669bdf"/>
<rect x="320" y="537" width="40" height="40" fill="#669bdf"/>
<rect x="360" y="537" width="40" height="40" fill="#659bde"/>
<rect x="400" y="537" width="40" height="40" fill="#639add"/>
<rect x="440" y="537" width="40" height="40" fill="#6299dc"/>
<rect x="480" y="537" width="40" height="40" fill="#6097db"/>
<rect x="520" y="537" width="40" height="40" fill="#5f96d9"/>
<rect x="560" y="537" width="40" height="40" fill="#5e95d8"/>
<rect x="600" y="537" width="40" height="40" fill="#5d93d7"/>
<rect x="640" y="537" width="40" height="40" fill="#5b92d5"/>
<rect x="680" y="537" width="40" height="40" fill="#5990d3"/>
<rect x="720" y="537" width="40" height="40" fill="#578ed1"/>
<rect x="760" y="537" width="40" height="40" fill="#558bcf"/>
<rect x="800" y="537" width="40" height="40" fill="#5289cd"/>
<rect x="840" y="537" width="40" height="40" fill="#4f86ca"/>
<rect x="880" y="537" width="40" height="40" fill="#4c83c7"/>
<rect x="920" y="537" width="40" height="40" fill="#497fc4"/>
<rect x="960" y="537" width="40" height="40" fill="#467bc0"/>
<rect x="1000" y="537" width="40" height="40" fill="#4377bd"/>
<rect x="1040" y="537" width="40" height="40" fill="#4074b9"/>
<rect x="1080" y="537" width="40" height="40" fill="#3e70b6"/>
<rect x="1120" y="537" width="40" height="40" fill="#3c6db4"/>
<rect x="1160" y="537" width="40" height="40" fill="#3c6db4"/>
<rect x="1200" y="537" width="40" height="40" fill="#3c6db4"/>
<rect x="1240" y="537" width="40" height="40" fill="#3c6db4"/>
<rect x="-120" y="577" width="40" height="40" fill="#4073b9"/>
<rect x="-80" y="577" width="40" height="40" fill="#4073b9"/>
<rect x="-40" y="577" width="40" height="40" fill="#4073b9"/>
<rect x="0" y="577" width="40" height="40" fill="#4377bd"/>
<rect x="40" y="577" width="40" height="40" fill="#497fc6"/>
<rect x="80" y="577" width="40" height="40" fill="#4f86cd"/>
<rect x="120" y="577" width="40" height="40" fill="#558bd2"/>
<rect x="160" y="577" width="40" height="40" fill="#5a90d6"/>
<rect x="200" y="577" width="40" height="40" fill="#5f95da"/>
<rect x="240" y="577" width="40" height="40" fill="#649ade"/>
<rect x="280" y="577" width="40" height="40" fill="#669ce0"/>
<rect x="320" y="577" width="40" height="40" fill="#669ce0"/>
<rect x="360" y="577" width="40" height="40" fill="#649bdf"/>
<rect x="400" y="577" width="40" height="40" fill="#639ade"/>
<rect x="440" y="577" width="40" height="40" fill="#6299dd"/>
<rect x="480" y="577" width="40" height="40" fill="#6198dc"/>
<rect x="520" y="577" width="40" height="40" fill="#6097db"/>
<rect x="560" y="577" width="40" height="40" fill="#5e96d9"/>
<rect x="600" y="577" width="40" height="40" fill="#5d94d8"/>
<rect x="640" y="577" width="40" height="40" fill="#5c92d6"/>
<rect x="680" y="577" width="40" height="40" fill="#5a90d4"/>
<rect x="720" y="577" width="40" height="40" fill="#578ed2"/>
<rect x="760" y="577" width="40" height="40" fill="#558cd0"/>
<rect x="800" y="577" width="40" height="40" fill="#5189cd"/>
<rect x="840" y="577" width="40" height="40" fill="#4e85ca"/>
<rect x="880" y="577" width="40" height="40" fill="#4b82c7"/>
<rect x="920" y="577" width="40" height="40" fill="#477ec4"/>
<rect x="960" y="577" width="40" height="40" fill="#447ac0"/>
<rect x="1000" y="577" width="40" height="40" fill="#4176bc"/>
<rect x="1040" y="577" width="40" height="40" fill="#3f72b8"/>
<rect x="1080" y="577" width="40" height="40" fill="#3c6eb5"/>
<rect x="1120" y="577" width="40" height="40" fill="#3b6cb3"/>
<rect x="1160" y="577" width="40" height="40" fill="#3b6cb3"/>
<rect x="1200" y="577" width="40" height="40" fill="#3b6cb3"/>
<rect x="1240" y="577" width="40" height="40" fill="#3b6cb3"/>
<rect x="-120" y="617" width="40" height="40" fill="#3f72b8"/>
<rect x="-80" y="617" width="40" height="40" fill="#3f72b8"/>
<rect x="-40" y="617" width="40" height="40" fill="#3f72b8"/>
<rect x="0" y="617" width="40" height="40" fill="#4176bc"/>
<rect x="40" y="617" width="40" height="40" fill="#477dc4"/>
<rect x="80" y="617" width="40" height="40" fill="#4d83cb"/>
<rect x="120" y="617" width="40" height="40" fill="#5189d0"/>
<rect x="160" y="617" width="40" height="40" fill="#568ed5"/>
<rect x="200" y="617" width="40" height="40" fill="#5b93d9"/>
<rect x="240" y="617" width="40" height="40" fill="#6097dd"/>
<rect x="280" y="617" width="40" height="40" fill="#639ade"/>
<rect x="320" y="617" width="40" height="40" fill="#639bdf"/>
<rect x="360" y="617" width="40" height="40" fill="#629ade"/>
<rect x="400" y="617" width="40" height="40" fill="#629add"/>
<rect x="440" y="617" width="40" height="40" fill="#6199dd"/>
<rect x="480" y="617" width="40" height="40" fill="#6098dc"/>
<rect x="520" y="617" width="40" height="40" fill="#5f97db"/>
<rect x="560" y="617" width="40" height="40" fill="#5e96da"/>
<rect x="600" y="617" width="40" height="40" fill="#5d94d8"/>
<rect x="640" y="617" width="40" height="40" fill="#5c93d7"/>
<rect x="680" y="617" width="40" height="40" fill="#5a91d5"/>
<rect x="720" y="617" width="40" height="40" fill="#578ed3"/>
<rect x="760" y="617" width="40" height="40" fill="#548bd0"/>
<rect x="800" y="617" width="40" height="40" fill="#5188ce"/>
<rect x="840" y="617" width="40" height="40" fill="#4d85cb"/>
<rect x="880" y="617" width="40" height="40" fill="#4981c7"/>
<rect x="920" y="617" width="40" height="40" fill="#467dc4"/>
<rect x="960" y="617" width="40" height="40" fill="#4379bf"/>
<rect x="1000" y="617" width="40" height="40" fill="#4075bb"/>
<rect x="1040" y="617" width="40" height="40" fill="#3d71b7"/>
<rect x="1080" y="617" width="40" height="40" fill="#3b6db4"/>
<rect x="1120" y="617" width="40" height="40" fill="#396bb2"/>
<rect x="1160" y="617" width="40" height="40" fill="#396bb2"/>
<rect x="1200" y="617" width="40" height="40" fill="#396bb2"/>
<rect x="1240" y="617" width="40" height="40" fill="#396bb2"/>
<rect x="-120" y="657" width="40" height="40" fill="#3d71b6"/>
<rect x="-80" y="657" width="40" height="40" fill="#3d71b6"/>
<rect x="-40" y="657" width="40" height="40" fill="#3d71b6"/>
<rect x="0" y="657" width="40" height="40" fill="#3f74ba"/>
<rect x="40" y="657" width="40" height="40" fill="#457bc1"/>
<rect x="80" y="657" width="40" height="40" fill="#4a81c8"/>
<rect x="120" y="657" width="40" height="40" fill="#4e86ce"/>
<rect x="160" y="657" width="40" height="40" fill="#538bd2"/>
<rect x="200" y="657" width="40" height="40" fill="#5890d7"/>
<rect x="240" y="657" width="40" height="40" fill="#5c94da"/>
<rect x="280" y="657" width="40" height="40" fill="#5f97dc"/>
<rect x="320" y="657" width="40" height="40" fill="#6098dd"/>
<rect x="360" y="657" width="40" height="40" fill="#5f99dd"/>
<rect x="400" y="657" width="40" height="40" fill="#5f98dc"/>
<rect x="440" y="657" width="40" height="40" fill="#5f98dc"/>
<rect x="480" y="657" width="40" height="40" fill="#5f98db"/>
<rect x="520" y="657" width="40" height="40" fill="#5e97db"/>
<rect x="560" y="657" width="40" height="40" fill="#5d96da"/>
<rect x="600" y="657" width="40" height="40" fill="#5c94d9"/>
<rect x="640" y="657" width="40" height="40" fill="#5b92d7"/>
<rect x="680" y="657" width="40" height="40" fill="#5990d5"/>
<rect x="720" y="657" width="40" height="40" fill="#568ed3"/>
<rect x="760" y="657" width="40" height="40" fill="#538bd0"/>
<rect x="800" y="657" width="40" height="40" fill="#5088ce"/>
<rect x="840" y="657" width="40" height="40" fill="#4c84ca"/>
<rect x="880" y="657" width="40" height="40" fill="#4881c7"/>
<rect x="920" y="657" width="40" height="40" fill="#447dc3"/>
<rect x="960" y="657" width="40" height="40" fill="#4178bf"/>
<rect x="1000" y="657" width="40" height="40" fill="#3e74bb"/>
<rect x="1040" y="657" width="40" height="40" fill="#3c70b6"/>
<rect x="1080" y="657" width="40" height="40" fill="#396cb2"/>
<rect x="1120" y="657" width="40" height="40" fill="#3869b1"/>
<rect x="1160" y="657" width="40" height="40" fill="#3869b1"/>
<rect x="1200" y="657" width="40" height="40" fill="#3869b1"/>
<rect x="1240" y="657" width="40" height="40" fill="#3869b1"/>
<rect x="-120" y="697" width="40" height="40" fill="#3c70b5"/>
<rect x="-80" y="697" width="40" height="40" fill="#3c70b5"/>
<rect x="-40" y="697" width="40" height="40" fill="#3c70b5"/>
<rect x="0" y="697" width="40" height="40" fill="#3e73b9"/>
<rect x="40" y="697" width="40" height="40" fill="#4379bf"/>
<rect x="80" y="697" width="40" height="40" fill="#487fc6"/>
<rect x="120" y="697" width="40" height="40" fill="#4c84cb"/>
<rect x="160" y="697" width="40" height="40" fill="#5089d0"/>
<rect x="200" y="697" width="40" height="40" fill="#558ed4"/>
<rect x="240" y="697" width="40" height="40" fill="#5892d8"/>
<rect x="280" y="697" width="40" height="40" fill="#5b94da"/>
<rect x="320" y="697" width="40" height="40" fill="#5c96db"/>
<rect x="360" y="697" width="40" height="40" fill="#5d97db"/>
<rect x="400" y="697" width="40" height="40" fill="#5d97db"/>
<rect x="440" y="697" width="40" height="40" fill="#5d97db"/>
<rect x="480" y="697" width="40" height="40" fill="#5d97db"/>
<rect x="520" y="697" width="40" height="40" fill="#5d96da"/>
<rect x="560" y="697" width="40" height="40" fill="#5c95d9"/>
<rect x="600" y="697" width="40" height="40" fill="#5b94d8"/>
<rect x="640" y="697" width="40" height="40" fill="#5a92d7"/>
<rect x="680" y="697" width="40" height="40" fill="#5890d5"/>
<rect x="720" y="697" width="40" height="40" fill="#558dd3"/>
<rect x="760" y="697" width="40" height="40" fill="#528ad0"/>
<rect x="800" y="697" width="40" height="40" fill="#4f87cd"/>
<rect x="840" y="697" width="40" height="40" fill="#4b84ca"/>
<rect x="880" y="697" width="40" height="40" fill="#4780c7"/>
<rect x="920" y="697" width="40" height="40" fill="#437cc3"/>
<rect x="960" y="697" width="40" height="40" fill="#4078bf"/>
<rect x="1000" y="697" width="40" height="40" fill="#3d73ba"/>
<rect x="1040" y="697" width="40" height="40" fill="#3b6fb6"/>
<rect x="1080" y="697" width="40" height="40" fill="#396bb2"/>
<rect x="1120" y="697" width="40" height="40" fill="#3769b0"/>
<rect x="1160" y="697" width="40" height="40" fill="#3769b0"/>
<rect x="1200" y="697" width="40" height="40" fill="#3769b0"/>
<rect x="1240" y="697" width="40" height="40" fill="#3769b0"/>
<rect x="-120" y="737" width="40" height="40" fill="#3c70b5"/>
<rect x="-80" y="737" width="40" height="40" fill="#3c70b5"/>
<rect x="-40" y="737" width="40" height="40" fill="#3c70b5"/>
<rect x="0" y="737" width="40" height="40" fill="#3e73b9"/>
<rect x="40" y="737" width="40" height="40" fill="#4379bf"/>
<rect x="80" y="737" width="40" height="40" fill="#487fc6"/>
<rect x="120" y="737" width="40" height="40" fill="#4c84cb"/>
<rect x="160" y="737" width="40" height="40" fill="#5089d0"/>
<rect x="200" y="737" width="40" height="40" fill="#558ed4"/>
<rect x="240" y="737" width="40" height="40" fill="#5892d8"/>
<rect x="280" y="737" width="40" height="40" fill="#5b94da"/>
<rect x="320" y="737" width="40" height="40" fill="#5c96db"/>
<rect x="360" y="737" width="40" height="40" fill="#5d97db"/>
<rect x="400" y="737" width="40" height="40" fill="#5d97db"/>
<rect x="440" y="737" width="40" height="40" fill="#5d97db"/>
<rect x="480" y="737" width="40" height="40" fill="#5d97db"/>
<rect x="520" y="737" width="40" height="40" fill="#5d96da"/>
<rect x="560" y="737" width="40" height="40" fill="#5c95d9"/>
<rect x="600" y="737" width="40" height="40" fill="#5b94d8"/>
<rect x="640" y="737" width="40" height="40" fill="#5a92d7"/>
<rect x="680" y="737" width="40" height="40" fill="#5890d5"/>
<rect x="720" y="737" width="40" height="40" fill="#558dd3"/>
<rect x="760" y="737" width="40" height="40" fill="#528ad0"/>
<rect x="800" y="737" width="40" height="40" fill="#4f87cd"/>
<rect x="840" y="737" width="40" height="40" fill="#4b84ca"/>
<rect x="880" y="737" width="40" height="40" fill="#4780c7"/>
<rect x="920" y="737" width="40" height="40" fill="#437cc3"/>
<rect x="960" y="737" width="40" height="40" fill="#4078bf"/>
<rect x="1000" y="737" width="40" height="40" fill="#3d73ba"/>
<rect x="1040" y="737" width="40" height="40" fill="#3b6fb6"/>
<rect x="1080" y="737" width="40" height="40" fill="#396bb2"/>
<rect x="1120" y="737" width="40" height="40" fill="#3769b0"/>
<rect x="1160" y="737" width="40" height="40" fill="#3769b0"/>
<rect x="1200" y="737" width="40" height="40" fill="#3769b0"/>
<rect x="1240" y="737" width="40" height="40" fill="#3769b0"/>
<rect x="-120" y="777" width="40" height="40" fill="#3c70b5"/>
<rect x="-80" y="777" width="40" height="40" fill="#3c70b5"/>
<rect x="-40" y="777" width="40" height="40" fill="#3c70b5"/>
<rect x="0" y="777" width="40" height="40" fill="#3e73b9"/>
<rect x="40" y="777" width="40" height="40" fill="#4379bf"/>
<rect x="80" y="777" width="40" height="40" fill="#487fc6"/>
<rect x="120" y="777" width="40" height="40" fill="#4c84cb"/>
<rect x="160" y="777" width="40" height="40" fill="#5089d0"/>
<rect x="200" y="777" width="40" height="40" fill="#558ed4"/>
<rect x="240" y="777" width="40" height="40" fill="#5892d8"/>
<rect x="280" y="777" width="40" height="40" fill="#5b94da"/>
<rect x="320" y="777" width="40" height="40" fill="#5c96db"/>
<rect x="360" y="777" width="40" height="40" fill="#5d97db"/>
<rect x="400" y="777" width="40" height="40" fill="#5d97db"/>
<rect x="440" y="777" width="40" height="40" fill="#5d97db"/>
<rect x="480" y="777" width="40" height="40" fill="#5d97db"/>
<rect x="520" y="777" width="40" height="40" fill="#5d96da"/>
<rect x="560" y="777" width="40" height="40" fill="#5c95d9"/>
<rect x="600" y="777" width="40" height="40" fill="#5b94d8"/>
<rect x="640" y="777" width="40" height="40" fill="#5a92d7"/>
<rect x="680" y="777" width="40" height="40" fill="#5890d5"/>
<rect x="720" y="777" width="40" height="40" fill="#558dd3"/>
<rect x="760" y="777" width="40" height="40" fill="#528ad0"/>
<rect x="800" y="777" width="40" height="40" fill="#4f87cd"/>
<rect x="840" y="777" width="40" height="40" fill="#4b84ca"/>
<rect x="880" y="777" width="40" height="40" fill="#4780c7"/>
<rect x="920" y="777" width="40" height="40" fill="#437cc3"/>
<rect x="960" y="777" width="40" height="40" fill="#4078bf"/>
<rect x="1000" y="777" width="40" height="40" fill="#3d73ba"/>
<rect x="1040" y="777" width="40" height="40" fill="#3b6fb6"/>
<rect x="1080" y="777" width="40" height="40" fill="#396bb2"/>
<rect x="1120" y="777" width="40" height="40" fill="#3769b0"/>
<rect x="1160" y="777" width="40" height="40" fill="#3769b0"/>
<rect x="1200" y="777" width="40" height="40" fill="#3769b0"/>
<rect x="1240" y="777" width="40" height="40" fill="#3769b0"/>
<rect x="-120" y="817" width="40" height="40" fill="#3c70b5"/>
<rect x="-80" y="817" width="40" height="40" fill="#3c70b5"/>
<rect x="-40" y="817" width="40" height="40" fill="#3c70b5"/>
<rect x="0" y="817" width="40" height="40" fill="#3e73b9"/>
<rect x="40" y="817" width="40" height="40" fill="#4379bf"/>
<rect x="80" y="817" width="40" height="40" fill="#487fc6"/>
<rect x="120" y="817" width="40" height="40" fill="#4c84cb"/>
<rect x="160" y="817" width="40" height="40" fill="#5089d0"/>
<rect x="200" y="817" width="40" height="40" fill="#558ed4"/>
<rect x="240" y="817" width="40" height="40" fill="#5892d8"/>
<rect x="280" y="817" width="40" height="40" fill="#5b94da"/>
<rect x="320" y="817" width="40" height="40" fill="#5c96db"/>
<rect x="360" y="817" width="40" height="40" fill="#5d97db"/>
<rect x="400" y="817" width="40" height="40" fill="#5d97db"/>
<rect x="440" y="817" width="40" height="40" fill="#5d97db"/>
<rect x="480" y="817" width="40" height="40" fill="#5d97db"/>
<rect x="520" y="817" width="40" height="40" fill="#5d96da"/>
<rect x="560" y="817" width="40" height="40" fill="#5c95d9"/>
<rect x="600" y="817" width="40" height="40" fill="#5b94d8"/>
<rect x="640" y="817" width="40" height="40" fill="#5a92d7"/>
<rect x="680" y="817" width="40" height="40" fill="#5890d5"/>
<rect x="720" y="817" width="40" height="40" fill="#558dd3"/>
<rect x="760" y="817" width="40" height="40" fill="#528ad0"/>
<rect x="800" y="817" width="40" height="40" fill="#4f87cd"/>
<rect x="840" y="817" width="40" height="40" fill="#4b84ca"/>
<rect x="880" y="817" width="40" height="40" fill="#4780c7"/>
<rect x="920" y="817" width="40" height="40" fill="#437cc3"/>
<rect x="960" y="817" width="40" height="40" fill="#4078bf"/>
<rect x="1000" y="817" width="40" height="40" fill="#3d73ba"/>
<rect x="1040" y="817" width="40" height="40" fill="#3b6fb6"/>
<rect x="1080" y="817" width="40" height="40" fill="#396bb2"/>
<rect x="1120" y="817" width="40" height="40" fill="#3769b0"/>
<rect x="1160" y="817" width="40" height="40" fill="#3769b0"/>
<rect x="1200" y="817" width="40" height="40" fill="#3769b0"/>
<rect x="1240" y="817" width="40" height="40" fill="#3769b0"/>
 </g>
 <path d="M0 339 C20 365 50 410 63 442 C78 480 88 520 93 561 C98 590 130 612 190 618 C230 620 260 607 420 592 L1126 580 L1126 97 L0 97 Z" fill="url(#sw)"/>
 <path d="M91 539 C95 480 105 420 130 370 C170 290 220 200 275 100" stroke="#ffffff" stroke-opacity="0.045" stroke-width="1.5" fill="none"/>
 <path d="M1070 97 L1126 97 L1126 150 L1070 189 Z" fill="#0a2a66" fill-opacity="0.1"/>
 <path d="M1070 189 L1126 150" stroke="#ffffff" stroke-opacity="0.06" stroke-width="1.2" fill="none"/>
</svg>
</div>

<div class="a" style="left:0;top:97px;width:1126px;height:1px;background:#8fb3e3"></div>
<div class="a" style="left:0;top:98px;width:1126px;height:1px;background:#17428a;opacity:0.6"></div>
<!-- ===== DIALOG ===== -->
<div class="a" style="left:282px;top:137px;width:802px;height:535px;background:#cfdbea;border:1px solid #dfe7f1;border-radius:5px 5px 4px 4px;box-shadow:inset 0 0 0 1px #c5d3e6, 0 2px 6px rgba(10,30,70,0.35)"></div>
<svg style="left:287px;top:143px" width="17" height="14">
 <rect x="0.5" y="3.5" width="15" height="10" fill="#f4f6fa" stroke="#5f7086"/>
 <path d="M0 1 L6 1 L7 3 L16 3 L16 4 L0 4 Z" fill="#1e8ae6"/>
</svg>
<span class="t" style="left:308px;top:144px;font-size:11px;font-weight:bold;color:#15428b;letter-spacing:0.4px">Muhasebe - Yönetim Kurulu Raporları</span>
<div class="a" style="left:1046px;top:142px;width:15px;height:15px;border:1px solid #a9c6ee;border-radius:3px;background:linear-gradient(#f6f9fe,#d9e7f8);box-shadow:inset 0 0 0 1px #fff"></div>
<div class="a" style="left:1049px;top:145px;width:10px;height:8px;border:1px solid #1d3f92;border-top-width:2px"></div>
<div class="a" style="left:1063px;top:142px;width:15px;height:15px;border:1px solid #a9c6ee;border-radius:3px;background:linear-gradient(#f6f9fe,#d9e7f8);box-shadow:inset 0 0 0 1px #fff"></div>
<svg style="left:1066px;top:145px" width="10" height="10"><path d="M1 1 L9 9 M9 1 L1 9" stroke="#1f3270" stroke-width="1.2"/></svg>
<!-- body panel -->
<div class="a" style="left:287px;top:162px;width:792px;height:505px;background:#fff;border:1px solid #99bbe8"></div>
<!-- grid -->
<div class="a" style="left:291px;top:166px;width:784px;height:402px;background:#fff;border:1px solid #99bbe8"></div>
<div class="a" style="left:292px;top:167px;width:782px;height:23px;background:linear-gradient(#fafafa,#ebebeb);border-bottom:1px solid #d0d0d0"></div>
<span class="t ht" style="left:297px">Tarih</span>
<span class="t ht" style="left:397px">Açıklama</span>
<span class="t ht" style="left:497px">Tutar(TL)</span>
<span class="t ht" style="left:597px">Fiş No</span>
<span class="t ht" style="left:697px">Belge Türü</span>
<span class="t ht" style="left:797px">Belge No</span>
<span class="t ht" style="left:897px">İlgi Hesap</span>
<span class="t ht" style="left:997px">İş Yeri</span>
<div class="hcol" style="left:391px;top:167px;height:23px"></div>
<div class="hcol" style="left:491px;top:167px;height:23px"></div>
<div class="hcol" style="left:591px;top:167px;height:23px"></div>
<div class="hcol" style="left:691px;top:167px;height:23px"></div>
<div class="hcol" style="left:791px;top:167px;height:23px"></div>
<div class="hcol" style="left:891px;top:167px;height:23px"></div>
<div class="hcol" style="left:991px;top:167px;height:23px"></div>
<div class="row sel" style="top:190px;height:22px"></div>
<span class="t gt" style="left:297px;top:196px">01.01.2014</span>
<span class="t gt" style="left:397px;top:196px">01.01.2014 AÇI...</span>
<span class="t gt" style="left:597px;top:196px">0000000000000...</span>
<span class="t gt" style="left:697px;top:196px;letter-spacing:-0.25px">Hizmet/Satınalm...</span>
<span class="t gt" style="left:897px;top:196px;letter-spacing:0.14px">320.10.01.02.00</span>
<span class="t gt" style="left:1046px;top:196px">ME</span>
<div class="row alt" style="top:212px"></div>
<span class="t gt" style="left:297px;top:217px">01.01.2014</span>
<span class="t gt" style="left:397px;top:217px">01.01.2014 AÇI...</span>
<span class="t gt" style="left:597px;top:217px">0000000000000...</span>
<span class="t gt" style="left:697px;top:217px;letter-spacing:-0.25px">Hizmet/Satınalm...</span>
<span class="t gt" style="left:897px;top:217px;letter-spacing:0.14px">320.10.01.02.01</span>
<span class="t gt" style="left:1046px;top:217px">ME</span>
<div class="row" style="top:233px"></div>
<span class="t gt" style="left:297px;top:238px">01.01.2014</span>
<span class="t gt" style="left:397px;top:238px">01.01.2014 AÇI...</span>
<span class="t gt" style="left:597px;top:238px">0000000000000...</span>
<span class="t gt" style="left:697px;top:238px;letter-spacing:-0.25px">Hizmet/Satınalm...</span>
<span class="t gt" style="left:897px;top:238px;letter-spacing:0.14px">320.10.01.02.03</span>
<span class="t gt" style="left:1046px;top:238px">ME</span>
<div class="row alt" style="top:254px"></div>
<span class="t gt" style="left:297px;top:259px">01.01.2014</span>
<span class="t gt" style="left:397px;top:259px">01.01.2014 AÇI...</span>
<span class="t gt" style="left:597px;top:259px">0000000000000...</span>
<span class="t gt" style="left:697px;top:259px;letter-spacing:-0.25px">Hizmet/Satınalm...</span>
<span class="t gt" style="left:897px;top:259px;letter-spacing:0.14px">320.10.01.02.04</span>
<span class="t gt" style="left:1046px;top:259px">ME</span>
<div class="row" style="top:275px"></div>
<span class="t gt" style="left:297px;top:280px">01.01.2014</span>
<span class="t gt" style="left:397px;top:280px">01.01.2014 AÇI...</span>
<span class="t gt" style="left:597px;top:280px">0000000000000...</span>
<span class="t gt" style="left:697px;top:280px;letter-spacing:-0.25px">Hizmet/Satınalm...</span>
<span class="t gt" style="left:897px;top:280px;letter-spacing:0.14px">320.10.01.02.12</span>
<span class="t gt" style="left:1046px;top:280px">ME</span>
<div class="row alt" style="top:296px"></div>
<span class="t gt" style="left:297px;top:301px">01.01.2014</span>
<span class="t gt" style="left:397px;top:301px">01.01.2014 AÇI...</span>
<span class="t gt" style="left:597px;top:301px">0000000000000...</span>
<span class="t gt" style="left:697px;top:301px;letter-spacing:-0.25px">Hizmet/Satınalm...</span>
<span class="t gt" style="left:897px;top:301px;letter-spacing:0.14px">320.10.01.02.15</span>
<span class="t gt" style="left:1046px;top:301px">ME</span>
<div class="row" style="top:317px"></div>
<span class="t gt" style="left:297px;top:322px">01.01.2014</span>
<span class="t gt" style="left:397px;top:322px">01.01.2014 AÇI...</span>
<span class="t gt" style="left:597px;top:322px">0000000000000...</span>
<span class="t gt" style="left:697px;top:322px;letter-spacing:-0.25px">Hizmet/Satınalm...</span>
<span class="t gt" style="left:897px;top:322px;letter-spacing:0.14px">320.10.01.02.16</span>
<span class="t gt" style="left:1046px;top:322px">ME</span>
<div class="row hov" style="top:338px"></div>
<span class="t gt" style="left:297px;top:343px">01.01.2014</span>
<span class="t gt" style="left:397px;top:343px">01.01.2014 AÇI...</span>
<span class="t gt" style="left:597px;top:343px">0000000000000...</span>
<span class="t gt" style="left:697px;top:343px;letter-spacing:-0.25px">Hizmet/Satınalm...</span>
<span class="t gt" style="left:897px;top:343px;letter-spacing:0.14px">320.10.01.02.22</span>
<span class="t gt" style="left:1046px;top:343px">ME</span>
<div class="row" style="top:359px"></div>
<span class="t gt" style="left:297px;top:364px">01.01.2014</span>
<span class="t gt" style="left:397px;top:364px">01.01.2014 AÇI...</span>
<span class="t gt" style="left:597px;top:364px">0000000000000...</span>
<span class="t gt" style="left:697px;top:364px;letter-spacing:-0.25px">Hizmet/Satınalm...</span>
<span class="t gt" style="left:897px;top:364px;letter-spacing:0.14px">320.10.01.02.25</span>
<span class="t gt" style="left:1046px;top:364px">ME</span>
<div class="row alt" style="top:380px"></div>
<span class="t gt" style="left:297px;top:385px">01.01.2014</span>
<span class="t gt" style="left:397px;top:385px">01.01.2014 AÇI...</span>
<span class="t gt" style="left:597px;top:385px">0000000000000...</span>
<span class="t gt" style="left:697px;top:385px;letter-spacing:-0.25px">Hizmet/Satınalm...</span>
<span class="t gt" style="left:897px;top:385px;letter-spacing:0.14px">320.10.01.02.08</span>
<span class="t gt" style="left:1046px;top:385px">ME</span>
<div class="row" style="top:401px"></div>
<span class="t gt" style="left:297px;top:406px">01.01.2014</span>
<span class="t gt" style="left:397px;top:406px">01.01.2014 AÇI...</span>
<span class="t gt" style="left:597px;top:406px">0000000000000...</span>
<span class="t gt" style="left:697px;top:406px;letter-spacing:-0.25px">Hizmet/Satınalm...</span>
<span class="t gt" style="left:897px;top:406px;letter-spacing:0.14px">320.10.01.02.09</span>
<span class="t gt" style="left:1046px;top:406px">ME</span>
<div class="row alt" style="top:422px"></div>
<span class="t gt" style="left:297px;top:427px">01.01.2014</span>
<span class="t gt" style="left:397px;top:427px">01.01.2014 AÇI...</span>
<span class="t gt" style="left:597px;top:427px">0000000000000...</span>
<span class="t gt" style="left:697px;top:427px;letter-spacing:-0.25px">Hizmet/Satınalm...</span>
<span class="t gt" style="left:897px;top:427px;letter-spacing:0.14px">320.10.01.02.28</span>
<span class="t gt" style="left:1046px;top:427px">ME</span>
<div class="row" style="top:443px"></div>
<span class="t gt" style="left:297px;top:448px">01.01.2014</span>
<span class="t gt" style="left:397px;top:448px">01.01.2014 AÇI...</span>
<span class="t gt" style="left:597px;top:448px">0000000000000...</span>
<span class="t gt" style="left:697px;top:448px;letter-spacing:-0.25px">Hizmet Faturası(...</span>
<span class="t gt" style="left:897px;top:448px;letter-spacing:0.14px">336.10.01.01.02</span>
<span class="t gt" style="left:1046px;top:448px">ME</span>
<div class="row alt" style="top:464px"></div>
<span class="t gt" style="left:297px;top:469px">01.01.2014</span>
<span class="t gt" style="left:397px;top:469px">01.01.2014 AÇI...</span>
<span class="t gt" style="left:597px;top:469px">0000000000000...</span>
<span class="t gt" style="left:697px;top:469px;letter-spacing:-0.25px">Hizmet Faturası(...</span>
<span class="t gt" style="left:897px;top:469px;letter-spacing:0.14px">336.10.01.02.01</span>
<span class="t gt" style="left:1046px;top:469px">ME</span>
<div class="row" style="top:485px"></div>
<span class="t gt" style="left:297px;top:490px">01.01.2014</span>
<span class="t gt" style="left:397px;top:490px">01.01.2014 AÇI...</span>
<span class="t gt" style="left:597px;top:490px">0000000000000...</span>
<span class="t gt" style="left:697px;top:490px;letter-spacing:-0.25px">Hizmet Faturası(...</span>
<span class="t gt" style="left:897px;top:490px;letter-spacing:0.14px">336.10.01.02.02</span>
<span class="t gt" style="left:1046px;top:490px">ME</span>
<div class="row alt" style="top:506px"></div>
<span class="t gt" style="left:297px;top:511px">01.01.2014</span>
<span class="t gt" style="left:397px;top:511px">01.01.2014 AÇI...</span>
<span class="t gt" style="left:597px;top:511px">0000000000000...</span>
<span class="t gt" style="left:697px;top:511px;letter-spacing:-0.25px">Hizmet Faturası(...</span>
<span class="t gt" style="left:897px;top:511px;letter-spacing:0.14px">336.10.01.02.03</span>
<span class="t gt" style="left:1046px;top:511px">ME</span>
<div class="row" style="top:527px"></div>
<span class="t gt" style="left:297px;top:532px">01.01.2014</span>
<span class="t gt" style="left:397px;top:532px">01.01.2014 AÇI...</span>
<span class="t gt" style="left:597px;top:532px">0000000000000...</span>
<span class="t gt" style="left:697px;top:532px;letter-spacing:-0.25px">Hizmet Faturası(...</span>
<span class="t gt" style="left:897px;top:532px;letter-spacing:0.14px">336.10.01.02.04</span>
<span class="t gt" style="left:1046px;top:532px">ME</span>
<div class="gcol" style="left:391px;top:190px;height:358px"></div>
<div class="gcol" style="left:491px;top:190px;height:358px"></div>
<div class="gcol" style="left:591px;top:190px;height:358px"></div>
<div class="gcol" style="left:691px;top:190px;height:358px"></div>
<div class="gcol" style="left:791px;top:190px;height:358px"></div>
<div class="gcol" style="left:891px;top:190px;height:358px"></div>
<div class="gcol" style="left:991px;top:190px;height:358px"></div>
<div class="a" style="left:292px;top:190px;width:766px;height:22px;border-top:1px dotted #404040;border-bottom:1px dotted #404040"></div>
<!-- black box -->
<div class="a" style="left:514px;top:195px;width:76px;height:353px;border:5px solid #000;background:#fff"></div>
<!-- vertical scrollbar -->
<div class="a" style="left:1058px;top:190px;width:16px;height:359px;background:#efefef;border-left:1px solid #e4e4e4"></div>
<svg style="left:1062px;top:197px" width="9" height="5"><path d="M0 4.5 L4.5 0 L9 4.5 Z" fill="#3a3a3a"/></svg>
<div class="a" style="left:1058px;top:208px;width:15px;height:211px;border:1px solid #a8a8a8;border-radius:2px;background:linear-gradient(90deg,#f6f6f6,#e8e8e8 50%,#d6d6d6)"></div>
<div class="a" style="left:1062px;top:310px;width:7px;height:7px;border-top:1px solid #8a8a8a;border-bottom:1px solid #8a8a8a"></div><div class="a" style="left:1062px;top:313px;width:7px;height:1px;background:#8a8a8a"></div>
<svg style="left:1062px;top:539px" width="9" height="5"><path d="M0 0 L9 0 L4.5 4.5 Z" fill="#3a3a3a"/></svg>
<!-- horizontal scrollbar -->
<div class="a" style="left:292px;top:548px;width:782px;height:19px;background:#efefef"></div>
<svg style="left:297px;top:555px" width="5" height="8"><path d="M4.5 0.5 L0.5 4 L4.5 7.5 Z" fill="#444"/></svg>
<div class="a" style="left:310px;top:551px;width:597px;height:15px;border:1px solid #a0a0a0;border-radius:2px;background:linear-gradient(#f8f8f8,#e6e6e6 50%,#d0d0d0)"></div>
<div class="a" style="left:604px;top:555px;width:7px;height:7px;border-left:1px solid #777;border-right:1px solid #777"></div>
<div class="a" style="left:606px;top:555px;width:1px;height:7px;background:#777"></div>
<svg style="left:1047px;top:555px" width="5" height="8"><path d="M0.5 0.5 L4.5 4 L0.5 7.5 Z" fill="#444"/></svg>
<!-- paging toolbar -->
<div class="a" style="left:291px;top:567px;width:784px;height:30px;background:linear-gradient(#e0e9f6,#d5e2f2);border:1px solid #99bbe8"></div>
<div class="a" style="left:295px;top:571px;width:21px;height:21px;border:1px solid #c9d6e8;border-radius:3px"></div><div class="a" style="left:318px;top:571px;width:21px;height:21px;border:1px solid #c9d6e8;border-radius:3px"></div>
<svg style="left:300px;top:576px" width="12" height="12"><rect x="0" y="0.5" width="2.5" height="11" fill="#c0c7cf"/><path d="M11 0 L4 6 L11 12 Z" fill="#c0c7cf"/></svg>
<svg style="left:325px;top:576px" width="8" height="12"><path d="M7.5 0 L0.5 6 L7.5 12 Z" fill="#c0c7cf"/></svg>
<div class="a" style="left:342px;top:575px;width:1px;height:14px;background:#99bbe8"></div><div class="a" style="left:343px;top:575px;width:1px;height:14px;background:#fff"></div>
<span class="t" style="left:349px;top:577px;font-size:11px;color:#333">Sayfa</span>
<div class="a" style="left:386px;top:571px;width:30px;height:22px;background:#fff;border:1px solid #b5b8c8"></div>
<span class="t" style="left:390px;top:577px;font-size:11px;color:#000">1</span>
<span class="t" style="left:423px;top:577px;font-size:11px;color:#333">/ 20</span>
<div class="a" style="left:449px;top:575px;width:1px;height:14px;background:#99bbe8"></div><div class="a" style="left:450px;top:575px;width:1px;height:14px;background:#fff"></div>
<svg style="left:460px;top:576px" width="8" height="12"><defs><linearGradient id="ag" x1="0" y1="0" x2="1" y2="1"><stop offset="0" stop-color="#8ab0f5"/><stop offset="1" stop-color="#1c4cc0"/></linearGradient></defs><path d="M0.5 0 L7 5.7 L0.5 11.5 Z" fill="url(#ag)"/></svg>
<svg style="left:482px;top:576px" width="12" height="12"><path d="M0.5 0 L7 5.7 L0.5 11.5 Z" fill="url(#ag)"/><rect x="8" y="0" width="2.8" height="12" fill="url(#ag)"/></svg>
<div class="a" style="left:501px;top:575px;width:1px;height:14px;background:#99bbe8"></div>
<div class="a" style="left:502px;top:575px;width:1px;height:14px;background:#fff"></div>
<svg style="left:508px;top:574px" width="16" height="16"><path d="M2.2 7.2 C2.5 3.5 6.5 1.2 10.5 2.8" stroke="#2f86e6" stroke-width="2.6" fill="none"/><path d="M9 0.2 L14.5 3.2 L10.2 8 Z" fill="#2f86e6"/><path d="M13.8 8.8 C13.5 12.5 9.5 14.8 5.5 13.2" stroke="#2f86e6" stroke-width="2.6" fill="none"/><path d="M7 15.8 L1.5 12.8 L5.8 8 Z" fill="#2f86e6"/></svg>
<!-- form -->
<span class="t" style="left:294px;top:620px;font-size:11px;color:#000">Tarih :</span>
<div class="a" style="left:330px;top:612px;width:94px;height:22px;background:#fff;border:1px solid #b5b8c8"></div>
<div class="a" style="left:406px;top:613px;width:17px;height:20px;background:linear-gradient(#e3e3e3,#cfcfcf);border-left:1px solid #c8c8c8"></div>
<svg style="left:408px;top:615px" width="14" height="12"><rect x="0.5" y="0.5" width="12" height="11" fill="#f4f4f4" stroke="#8a8a8a"/><rect x="0.5" y="0.5" width="12" height="2.5" fill="#9a9a9a"/><path d="M1 6 H12 M1 9 H12 M4.5 3 V11 M8.5 3 V11" stroke="#c4c4c4" stroke-width="0.8"/><circle cx="10.5" cy="3" r="1.6" fill="#fff" stroke="#b00" stroke-width="1"/></svg>
<span class="t" style="left:334px;top:618px;font-size:11px;color:#000">01.01.2014</span>
<div class="a" style="left:430px;top:612px;width:94px;height:22px;background:#fff;border:1px solid #7eadd9"></div>
<div class="a" style="left:506px;top:613px;width:17px;height:20px;background:linear-gradient(#dbe6f3,#c4d6ec);border-left:1px solid #9fc0e4"></div>
<svg style="left:508px;top:615px" width="14" height="12"><rect x="0.5" y="0.5" width="12" height="11" fill="#f4f4f4" stroke="#8a8a8a"/><rect x="0.5" y="0.5" width="12" height="2.5" fill="#9a9a9a"/><path d="M1 6 H12 M1 9 H12 M4.5 3 V11 M8.5 3 V11" stroke="#c4c4c4" stroke-width="0.8"/><circle cx="10.5" cy="3" r="1.6" fill="#fff" stroke="#b00" stroke-width="1"/></svg>
<span class="t" style="left:434px;top:618px;font-size:11px;color:#000">31.01.2014</span>
<div class="a" style="left:490px;top:617px;width:1px;height:13px;background:#000"></div>
<!-- buttons -->
<div class="a" style="left:530px;top:606px;width:100px;height:36px;border:1px solid #c9c9c9;border-radius:3px;background:linear-gradient(#fbfbfb 0%,#f1f1f1 50%,#e3e3e3 51%,#e6e6e6 100%)"></div>
<svg style="left:539px;top:612px" width="23" height="25"><path d="M4.5 1.5 H16 L20.5 6 V22.5 H4.5 Z" fill="#cfe3f8" stroke="#6f91c8"/><path d="M16 1.5 V6 H20.5" fill="#8fb6e6" stroke="#6f91c8"/><circle cx="12" cy="11" r="5" fill="#e9f4fd" stroke="#4d79b8" stroke-width="1.5"/><path d="M8.5 14.5 L2 21" stroke="#f09a1c" stroke-width="2.6"/></svg>
<span class="t" style="left:581px;top:620px;font-size:11px;color:#333">Listele</span>
<div class="a" style="left:636px;top:606px;width:100px;height:36px;border:1px solid #c9c9c9;border-radius:3px;background:linear-gradient(#fbfbfb 0%,#f1f1f1 50%,#e3e3e3 51%,#e6e6e6 100%)"></div>
<svg style="left:643px;top:611px" width="26" height="26"><path d="M1.5 1.5 H13 L17.5 6 V22 H1.5 Z" fill="#e4eefb" stroke="#6f91c8"/><path d="M13 1.5 V6 H17.5" fill="#8fb6e6" stroke="#6f91c8"/><rect x="9" y="9" width="15" height="15" fill="#fff" stroke="#d8141c" stroke-width="2"/><path d="M16.5 11 C15 14 14 17 11.5 21 M16.5 11 C17 15 19 18 22 19 M12 18 C15 17 18 17 21.5 18" stroke="#d8141c" stroke-width="1.1" fill="none"/></svg>
<span class="t" style="left:694px;top:620px;font-size:11px;color:#333">Pdf</span>
<!-- dialog status -->
<div class="a" style="left:288px;top:648px;width:790px;height:18px;background:linear-gradient(#dde8f5,#d3e1f1);border-top:1px solid #99bbe8"></div>
<span class="t" style="left:294px;top:653px;font-size:11px;color:#333;letter-spacing:-0.25px">Listelenen Kayıt Sayısı : 486</span>

<!-- ===== RIGHT PANEL ===== -->
<div class="a" style="left:1126px;top:97px;width:240px;height:616px;background:#fff;border-left:1px solid #8db2e3;border-bottom:1px solid #99bbe8"></div>
<div class="a" style="left:1127px;top:118px;width:239px;height:4px;background:#dbe6f5;border-top:1px solid #99bbe8;border-bottom:1px solid #99bbe8"></div>
<div class="a" style="left:1128px;top:98px;width:89px;height:22px;border:1px solid #8db2e3;border-bottom:none;border-radius:3px 3px 0 0;background:linear-gradient(#fbfdff,#dbe6f5 60%,#dbe6f5)"></div>
<span class="t" style="left:1138px;top:104px;font-size:11px;font-weight:bold;color:#15428b;letter-spacing:-0.2px">DUYURULAR</span>
<span class="t" style="left:1195px;top:140px;font-size:16px;color:#000;letter-spacing:1.1px">Bilgi Ekleme</span>
<span class="t" style="left:1150px;top:173px;font-size:12px;color:#000">Telefon, Adres ve Hesap No Bilgileri</span>
<span class="t" style="left:1227px;top:189px;font-size:12px;color:#000;letter-spacing:-0.3px">Eklendi</span>
<div class="a" style="left:1130px;top:213px;width:232px;height:2px;background:#555;border-bottom:1px solid #aaa"></div>

<!-- ===== STATUS BAR ===== -->
<div class="a" style="left:0;top:713px;width:1366px;height:25px;background:linear-gradient(#e4ecf6,#d8e4f1);border-top:1px solid #a6c3ea;border-left:1px solid #99bbe8"></div>
<div class="a" style="left:1127px;top:714px;width:227px;height:24px;background:#d7e3f1"></div>
<span class="t" style="left:1175px;top:723px;font-size:10px;color:#000;letter-spacing:-0.1px">KEMAL BAYAT</span>
<span class="t" style="left:1300px;top:722px;font-size:11px;color:#000">21:46:59</span>
<div class="a" style="left:1354px;top:714px;width:12px;height:24px;background:linear-gradient(#f8f8f8,#e8e8e8);border-left:1px solid #c8c8c8"></div>
<div class="a" style="left:14px;top:733px;width:25px;height:25px;border-radius:50%;border:1.5px solid #2c5a86;background:linear-gradient(#c9d3de,#9fb0c2)"></div>

</body></html>
